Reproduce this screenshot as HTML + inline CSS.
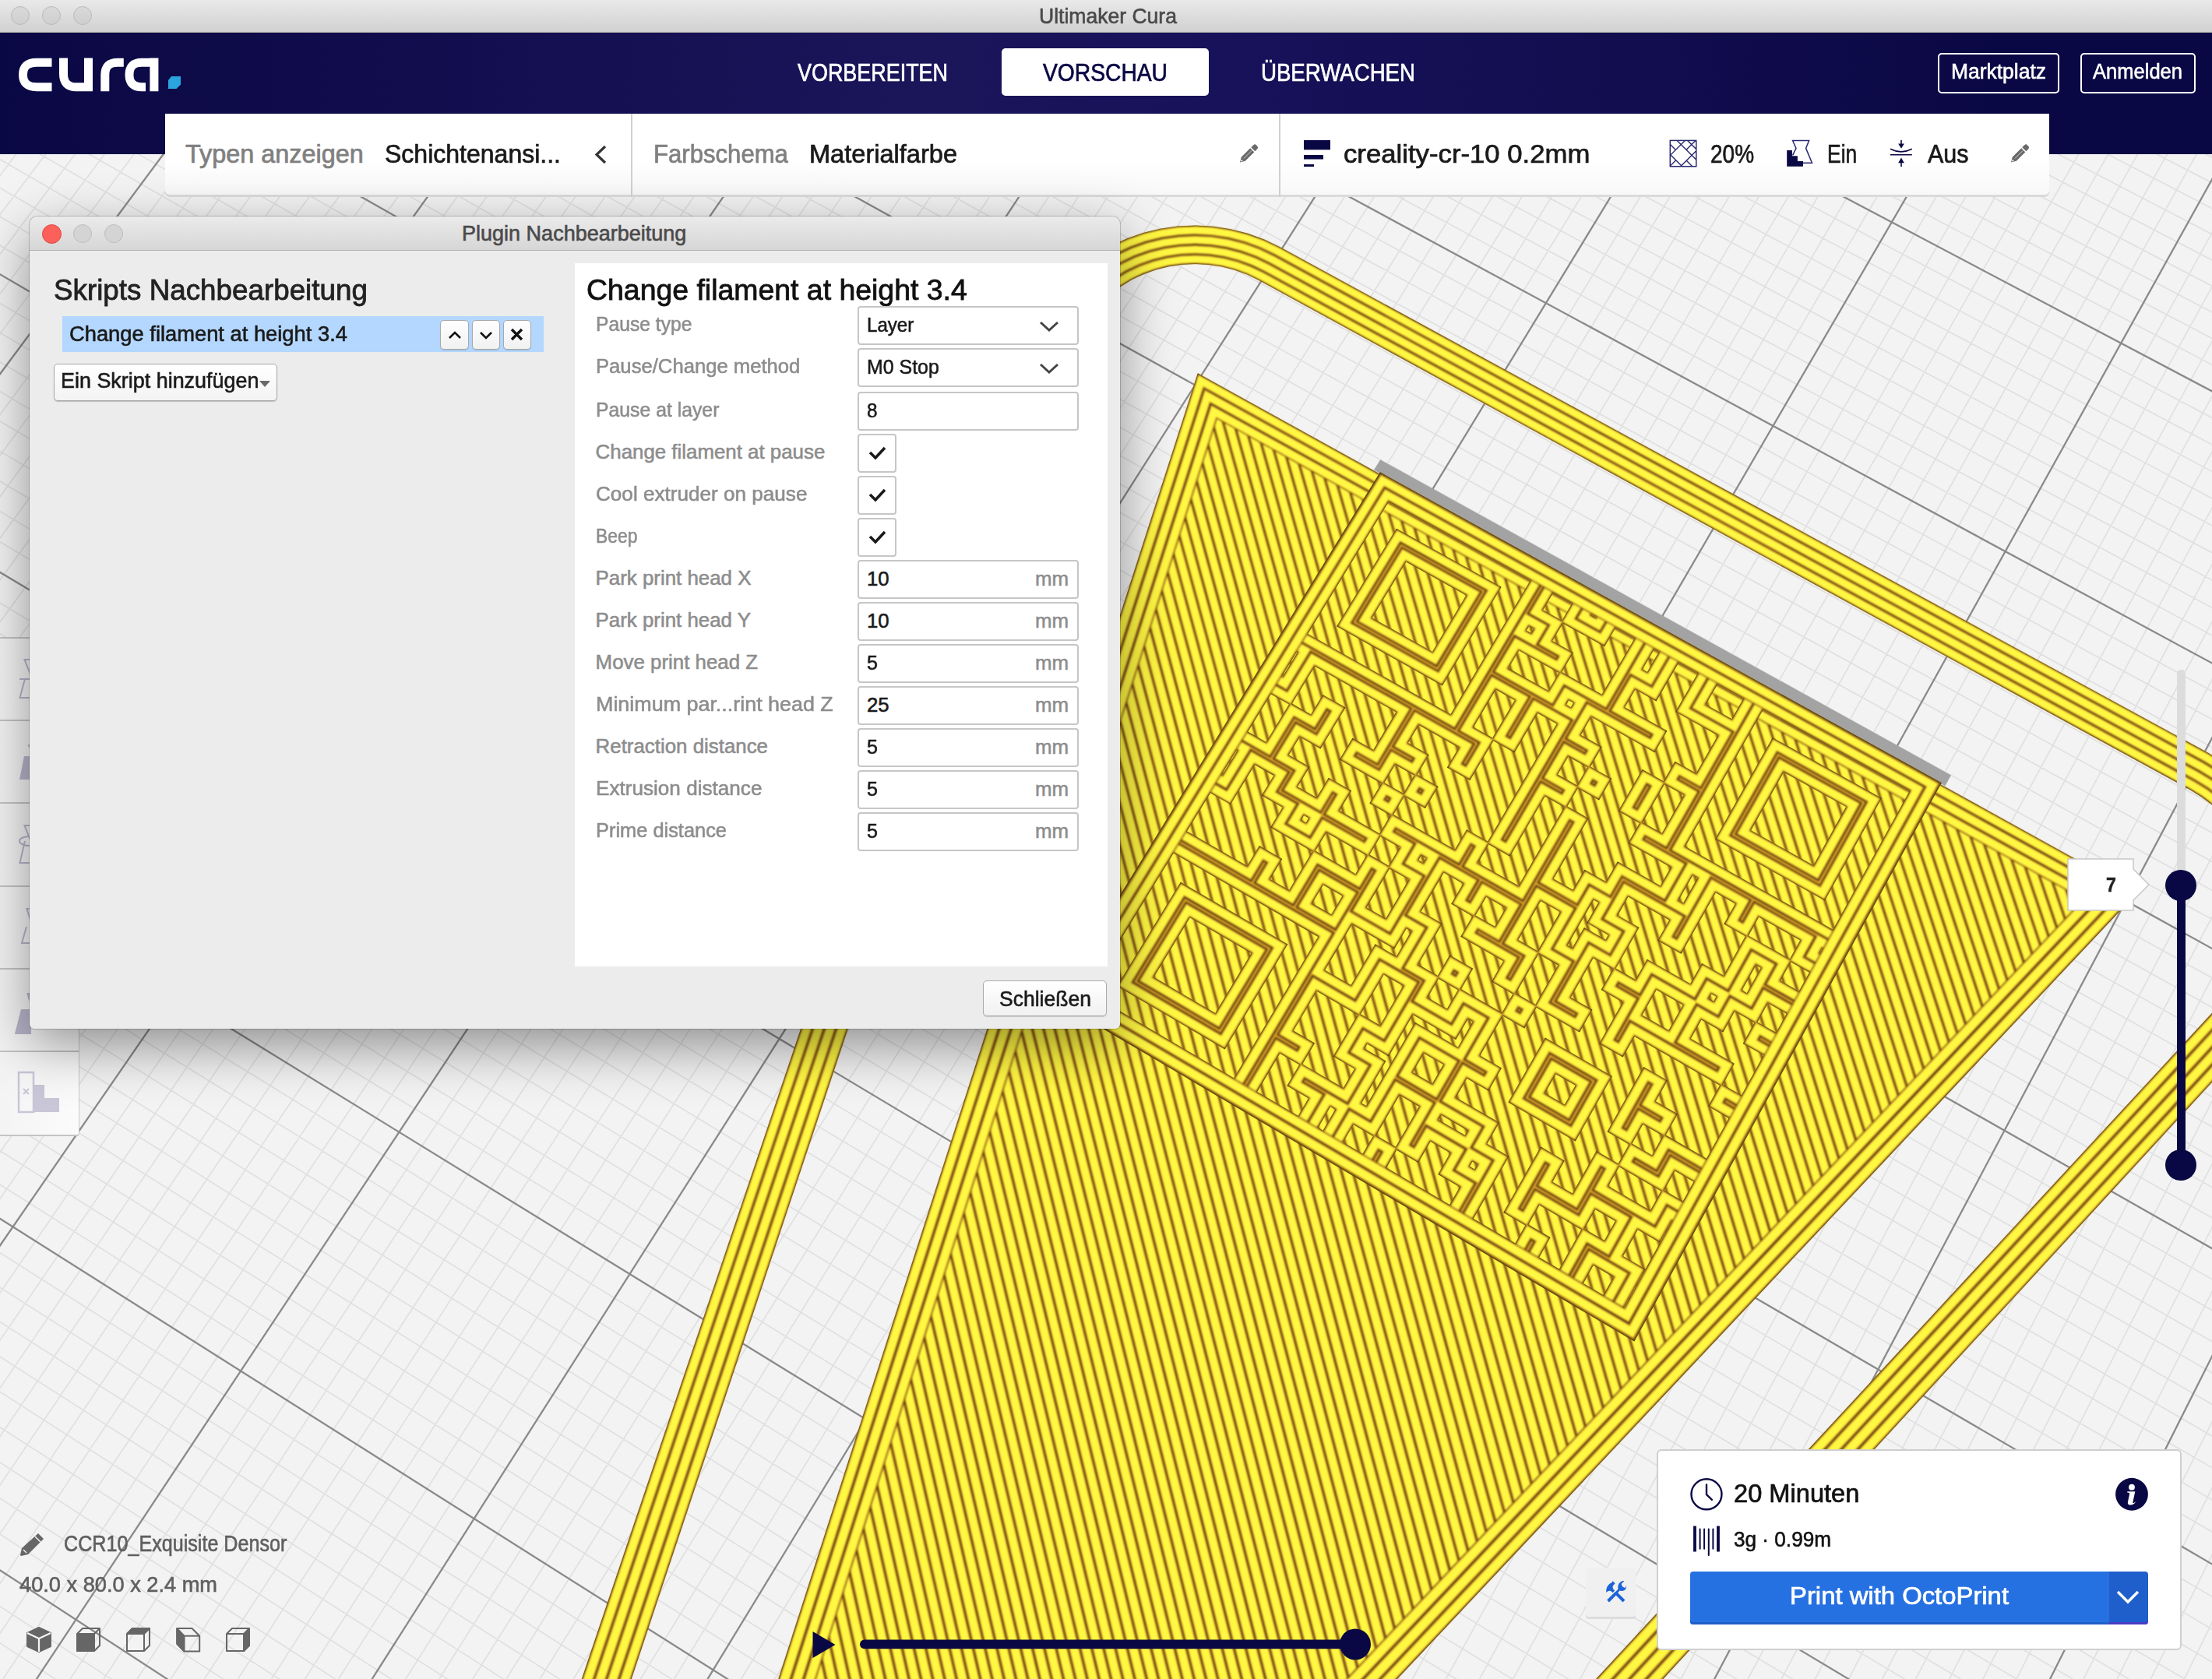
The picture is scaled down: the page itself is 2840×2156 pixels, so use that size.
<!DOCTYPE html><html><head><meta charset="utf-8"><style>
html,body{margin:0;padding:0;width:2840px;height:2156px;overflow:hidden;background:#f3f3f3;font-family:"Liberation Sans",sans-serif;}
.t{position:absolute;white-space:nowrap;line-height:1.117;transform-origin:0 0;-webkit-text-stroke-width:0.022em;}
.a{position:absolute;}
svg{position:absolute;left:0;top:0;}
</style></head><body>
<svg width="2840" height="2156" viewBox="0 0 2840 2156">
<defs><filter id="bl" x="-5%" y="-5%" width="110%" height="110%"><feGaussianBlur stdDeviation="0.95"/></filter></defs>
<rect width="2840" height="2156" fill="#f3f3f3"/>
<path d="M-1766.0,1781.3L804.4,-1455.7M-1738.8,1800.1L828.4,-1443.9M-1711.6,1818.9L852.5,-1432.0M-1684.3,1837.8L876.6,-1420.1M-1656.9,1856.7L900.8,-1408.2M-1629.5,1875.7L925.0,-1396.3M-1601.9,1894.8L949.2,-1384.3M-1574.4,1913.8L973.5,-1372.4M-1546.7,1933.0L997.9,-1360.4M-1491.2,1971.3L1046.7,-1336.3M-1463.4,1990.6L1071.2,-1324.2M-1435.5,2009.9L1095.7,-1312.1M-1407.5,2029.3L1120.3,-1300.0M-1379.4,2048.7L1144.9,-1287.9M-1351.3,2068.1L1169.6,-1275.7M-1323.1,2087.6L1194.3,-1263.6M-1294.9,2107.2L1219.1,-1251.3M-1266.6,2126.8L1243.9,-1239.1M-1209.7,2166.1L1293.7,-1214.6M-1181.2,2185.8L1318.6,-1202.3M-1152.6,2205.6L1343.6,-1190.0M-1123.9,2225.5L1368.7,-1177.6M-1095.1,2245.4L1393.8,-1165.2M-1066.3,2265.3L1419.0,-1152.8M-1037.4,2285.3L1444.2,-1140.4M-1008.5,2305.3L1469.4,-1128.0M-979.5,2325.4L1494.7,-1115.5M-921.2,2365.7L1545.5,-1090.5M-891.9,2386.0L1570.9,-1077.9M-862.6,2406.2L1596.4,-1065.4M-833.2,2426.6L1622.0,-1052.8M-803.7,2447.0L1647.6,-1040.2M-774.2,2467.4L1673.2,-1027.5M-744.6,2487.9L1698.9,-1014.8M-714.9,2508.4L1724.7,-1002.2M-685.1,2529.0L1750.5,-989.4M-625.4,2570.4L1802.3,-963.9M-595.4,2591.1L1828.2,-951.1M-565.3,2611.9L1854.2,-938.3M-535.2,2632.8L1880.3,-925.5M-504.9,2653.7L1906.4,-912.6M-474.7,2674.6L1932.6,-899.7M-444.3,2695.6L1958.8,-886.8M-413.8,2716.7L1985.1,-873.8M-383.3,2737.8L2011.4,-860.9M-322.0,2780.2L2064.2,-834.8M-291.3,2801.5L2090.7,-821.8M-260.4,2822.8L2117.2,-808.7M-229.5,2844.2L2143.8,-795.6M-198.5,2865.7L2170.5,-782.5M-167.4,2887.2L2197.2,-769.3M-136.3,2908.7L2223.9,-756.1M-105.0,2930.3L2250.7,-742.9M-73.7,2952.0L2277.6,-729.7M-10.8,2995.5L2331.4,-703.1M20.7,3017.3L2358.5,-689.8M52.4,3039.2L2385.5,-676.5M84.1,3061.2L2412.7,-663.1M115.9,3083.2L2439.8,-649.7M147.8,3105.3L2467.1,-636.3M179.8,3127.4L2494.4,-622.8M211.8,3149.5L2521.7,-609.4M244.0,3171.8L2549.1,-595.9M308.5,3216.4L2604.1,-568.8M340.9,3238.8L2631.7,-555.2M373.4,3261.3L2659.3,-541.6M406.0,3283.8L2687.0,-527.9M438.6,3306.4L2714.7,-514.2M471.4,3329.1L2742.5,-500.5M504.2,3351.8L2770.4,-486.8M537.1,3374.6L2798.3,-473.0M570.1,3397.4L2826.3,-459.3M636.3,3443.2L2882.4,-431.6M669.6,3466.2L2910.6,-417.7M703.0,3489.3L2938.8,-403.8M736.4,3512.4L2967.0,-389.9M769.9,3535.6L2995.3,-376.0M803.5,3558.9L3023.7,-362.0M837.2,3582.2L3052.2,-347.9M871.0,3605.6L3080.7,-333.9M904.9,3629.0L3109.2,-319.8M973.0,3676.1L3166.5,-291.6M1007.1,3699.7L3195.2,-277.4M1041.4,3723.4L3224.0,-263.2M1075.7,3747.2L3252.9,-249.0M1110.2,3771.0L3281.8,-234.8M1144.7,3794.9L3310.8,-220.5M1179.3,3818.9L3339.8,-206.2M1214.1,3842.9L3368.9,-191.8M1248.9,3867.0L3398.1,-177.5M1318.8,3915.3L3456.6,-148.6M1353.9,3939.6L3485.9,-134.2M1389.1,3964.0L3515.3,-119.7M1424.4,3988.4L3544.8,-105.2M1459.8,4012.9L3574.3,-90.6M1495.3,4037.4L3603.9,-76.0M1530.8,4062.0L3633.6,-61.4M1566.5,4086.7L3663.3,-46.8M1602.3,4111.5L3693.1,-32.1M1674.2,4161.2L3752.8,-2.6M1710.2,4186.1L3782.8,12.1M1746.4,4211.2L3812.8,26.9M1782.7,4236.3L3842.9,41.8M1819.1,4261.4L3873.1,56.6M1855.5,4286.7L3903.3,71.5M1892.1,4312.0L3933.6,86.5M1928.8,4337.4L3964.0,101.4M1965.6,4362.8L3994.4,116.4M2039.5,4413.9L4055.4,146.5M2076.6,4439.6L4086.0,161.6M2113.8,4465.3L4116.7,176.7M2151.1,4491.1L4147.5,191.9M2188.5,4517.0L4178.3,207.0M2226.0,4543.0L4209.2,222.3M2263.6,4569.0L4240.1,237.5M2301.4,4595.1L4271.1,252.8M2339.2,4621.3L4302.2,268.1M-1768.2,1731.3L2396.8,4603.7M-1743.5,1700.2L2416.3,4560.1M-1718.8,1669.2L2435.7,4516.8M-1694.2,1638.3L2455.1,4473.6M-1669.7,1607.6L2474.3,4430.6M-1645.3,1577.0L2493.5,4387.9M-1621.0,1546.5L2512.6,4345.3M-1596.8,1516.1L2531.6,4302.9M-1572.7,1485.8L2550.5,4260.7M-1524.7,1425.7L2588.1,4177.0M-1500.9,1395.8L2606.7,4135.4M-1477.2,1366.0L2625.3,4094.0M-1453.5,1336.3L2643.7,4052.8M-1430.0,1306.7L2662.1,4011.7M-1406.5,1277.3L2680.4,3970.9M-1383.2,1248.0L2698.7,3930.2M-1359.9,1218.7L2716.8,3889.8M-1336.7,1189.6L2734.9,3849.5M-1290.6,1131.8L2770.7,3769.5M-1267.7,1103.0L2788.5,3729.7M-1244.8,1074.3L2806.3,3690.2M-1222.1,1045.8L2823.9,3650.8M-1199.4,1017.3L2841.5,3611.6M-1176.8,989.0L2859.0,3572.5M-1154.3,960.8L2876.4,3533.6M-1131.9,932.7L2893.8,3495.0M-1109.6,904.6L2911.0,3456.4M-1065.2,848.9L2945.4,3379.9M-1043.1,821.2L2962.4,3341.9M-1021.2,793.6L2979.4,3304.0M-999.3,766.1L2996.3,3266.4M-977.4,738.7L3013.1,3228.8M-955.7,711.4L3029.8,3191.5M-934.0,684.3L3046.5,3154.3M-912.4,657.2L3063.1,3117.3M-890.9,630.2L3079.6,3080.4M-848.2,576.5L3112.5,3007.1M-826.9,549.8L3128.8,2970.7M-805.7,523.2L3145.0,2934.5M-784.6,496.7L3161.2,2898.4M-763.6,470.3L3177.3,2862.5M-742.6,444.0L3193.3,2826.7M-721.8,417.8L3209.3,2791.1M-700.9,391.7L3225.2,2755.6M-680.2,365.7L3241.0,2720.3M-639.0,314.0L3272.5,2650.1M-618.5,288.2L3288.1,2615.2M-598.1,262.6L3303.7,2580.5M-577.7,237.1L3319.2,2545.9M-557.4,211.6L3334.7,2511.5M-537.2,186.2L3350.0,2477.2M-517.1,161.0L3365.3,2443.0M-497.0,135.8L3380.6,2409.0M-477.0,110.7L3395.8,2375.1M-437.3,60.8L3425.9,2307.8M-417.5,36.0L3440.9,2274.4M-397.8,11.2L3455.9,2241.0M-378.1,-13.4L3470.7,2207.9M-358.6,-38.0L3485.6,2174.8M-339.1,-62.5L3500.3,2141.9M-319.6,-86.9L3515.0,2109.1M-300.3,-111.2L3529.6,2076.5M-281.0,-135.4L3544.2,2044.0M-242.6,-183.6L3573.2,1979.4M-223.5,-207.5L3587.6,1947.3M-204.5,-231.4L3601.9,1915.3M-185.5,-255.2L3616.2,1883.4M-166.6,-278.9L3630.4,1851.7M-147.8,-302.6L3644.6,1820.1M-129.0,-326.1L3658.7,1788.6M-110.3,-349.6L3672.7,1757.3M-91.7,-373.0L3686.7,1726.1M-54.6,-419.5L3714.5,1664.0M-36.1,-442.6L3728.4,1633.1M-17.8,-465.7L3742.1,1602.4M0.6,-488.7L3755.9,1571.8M18.8,-511.6L3769.5,1541.3M37.0,-534.5L3783.2,1510.9M55.1,-557.2L3796.7,1480.7M73.2,-579.9L3810.2,1450.6M91.2,-602.5L3823.7,1420.6M127.1,-647.5L3850.4,1360.9M144.9,-669.8L3863.7,1331.2M162.7,-692.1L3877.0,1301.7M180.4,-714.4L3890.2,1272.2M198.0,-736.5L3903.3,1242.9M215.6,-758.6L3916.4,1213.7M233.1,-780.6L3929.4,1184.6M250.6,-802.5L3942.4,1155.6M268.0,-824.4L3955.4,1126.7M302.7,-867.9L3981.1,1069.3M319.9,-889.5L3993.9,1040.8M337.1,-911.1L4006.7,1012.4M354.2,-932.6L4019.4,984.0M371.3,-954.0L4032.0,955.8M388.3,-975.3L4044.6,927.7M405.3,-996.6L4057.2,899.7M422.2,-1017.8L4069.7,871.8M439.0,-1039.0L4082.1,844.0M472.5,-1081.1L4106.9,788.7M489.2,-1102.0L4119.2,761.2M505.8,-1122.9L4131.5,733.8M522.4,-1143.7L4143.7,706.6M538.9,-1164.4L4155.9,679.4M555.4,-1185.1L4168.1,652.3M571.8,-1205.7L4180.1,625.3M588.2,-1226.2L4192.2,598.4M604.5,-1246.7L4204.2,571.7M636.9,-1287.4L4228.1,518.4M653.1,-1307.7L4240.0,491.9M669.2,-1327.9L4251.8,465.5M685.2,-1348.0L4263.6,439.2M701.2,-1368.1L4275.3,413.0M717.2,-1388.1L4287.0,386.9M733.1,-1408.1L4298.7,360.9M748.9,-1427.9L4310.3,335.0M764.7,-1447.8L4321.9,309.2" stroke="#e0e0e0" stroke-width="1.7" fill="none"/><path d="M-1793.1,1762.5L780.4,-1467.5M-1519.0,1952.1L1022.2,-1348.3M-1238.2,2146.4L1268.7,-1226.9M-950.3,2345.5L1520.1,-1103.0M-655.3,2549.7L1776.4,-976.7M-352.7,2759.0L2037.8,-847.9M-42.3,2973.7L2304.5,-716.4M276.2,3194.1L2576.6,-582.3M603.2,3420.3L2854.3,-445.4M938.9,3652.5L3137.8,-305.7M1283.8,3891.1L3427.3,-163.1M1638.2,4136.3L3722.9,-17.4M2002.5,4388.3L4024.9,131.4M2377.1,4647.5L4333.4,283.5M-1793.1,1762.5L2377.1,4647.5M-1548.7,1455.7L2569.3,4218.8M-1313.6,1160.6L2752.8,3809.4M-1087.4,876.7L2928.2,3418.1M-869.5,603.3L3096.1,3043.7M-659.6,339.8L3256.8,2685.1M-457.1,85.7L3410.9,2341.4M-261.7,-159.5L3558.7,2011.6M-73.1,-396.3L3700.7,1695.0M109.2,-625.0L3837.1,1390.7M285.4,-846.2L3968.3,1098.0M455.8,-1060.1L4094.5,816.3M620.7,-1267.1L4216.2,545.0M780.4,-1467.5L4333.4,283.5" stroke="#8a8a8a" stroke-width="2.3" fill="none"/>
<path d="M1328.6,429.2L1336.6,409.3L1346.8,390.3L1359.1,372.4L1373.4,355.9L1389.4,340.9L1407.1,327.6L1426.2,316.1L1446.4,306.6L1467.7,299.1L1489.6,293.7L1512.1,290.5L1534.8,289.5L1557.5,290.7L1580.0,294.2L1602.0,299.8L1623.2,307.5L1643.5,317.3L2835.6,967.0L2856.7,979.9L2876.4,994.7L2894.6,1011.3L2911.1,1029.6L2925.6,1049.3L2938.0,1070.3L2948.2,1092.3L2956.0,1115.0L2961.4,1138.2L2964.2,1161.7L2964.4,1185.2L2962.0,1208.4L2957.0,1231.0L2949.5,1252.8L2939.5,1273.5L2927.2,1292.9L2912.6,1310.8L764.0,3647.3L742.4,3668.6L718.9,3687.2L693.9,3703.1L667.7,3715.9L640.5,3725.6L612.7,3732.0L584.5,3735.1L556.4,3734.7L528.7,3731.0L501.6,3723.9L475.6,3713.6L450.9,3700.1L427.7,3683.7L406.5,3664.5L387.3,3642.8L370.5,3618.8L356.2,3592.9L344.5,3565.2L335.7,3536.3L329.7,3506.3L326.6,3475.6L326.5,3444.7L329.3,3413.8L335.0,3383.2L343.5,3353.4ZM405.0,3374.8L398.7,3397.2L394.5,3420.0L392.5,3443.1L392.6,3466.2L395.0,3489.1L399.6,3511.4L406.3,3533.0L415.0,3553.6L425.7,3572.9L438.3,3590.7L452.7,3606.8L468.5,3621.1L485.8,3633.3L504.2,3643.2L523.6,3650.9L543.7,3656.1L564.4,3658.9L585.3,3659.2L606.2,3656.9L626.9,3652.1L647.2,3645.0L666.7,3635.4L685.4,3623.7L702.8,3609.8L719.0,3594.1L2867.9,1270.7L2878.8,1257.5L2888.1,1243.0L2895.6,1227.6L2901.2,1211.4L2905.0,1194.5L2906.9,1177.2L2906.8,1159.7L2904.8,1142.1L2900.8,1124.7L2895.0,1107.7L2887.5,1091.2L2878.2,1075.5L2867.4,1060.7L2855.1,1047.0L2841.5,1034.5L2826.7,1023.4L2811.0,1013.7L1616.4,360.0L1601.2,352.6L1585.2,346.8L1568.8,342.6L1551.9,340.0L1534.9,339.1L1517.8,339.8L1501.0,342.2L1484.5,346.3L1468.6,351.9L1453.4,359.1L1439.2,367.7L1426.0,377.7L1414.0,389.0L1403.3,401.4L1394.1,414.8L1386.5,429.0L1380.6,444.0Z" fill="#2c2608" fill-rule="evenodd"/><g filter="url(#bl)"><path d="M1368.2,440.4L1374.7,424.3L1382.9,408.9L1392.8,394.5L1404.3,381.1L1417.3,369.0L1431.5,358.2L1446.9,348.9L1463.3,341.1L1480.5,335.0L1498.3,330.7L1516.5,328.1L1534.9,327.3L1553.2,328.3L1571.4,331.1L1589.2,335.6L1606.4,341.9L1622.8,349.8L2816.9,1002.6L2833.9,1013.0L2849.8,1025.0L2864.5,1038.5L2877.8,1053.3L2889.5,1069.3L2899.5,1086.3L2907.7,1104.0L2913.9,1122.4L2918.2,1141.2L2920.4,1160.2L2920.5,1179.1L2918.5,1197.8L2914.5,1216.0L2908.4,1233.6L2900.3,1250.3L2890.3,1265.9L2878.5,1280.2L729.6,3606.7L712.2,3623.7L693.3,3638.7L673.2,3651.4L652.0,3661.8L630.1,3669.5L607.7,3674.7L585.1,3677.1L562.5,3676.9L540.2,3673.9L518.4,3668.2L497.4,3659.9L477.5,3649.1L458.9,3635.9L441.7,3620.5L426.3,3603.1L412.7,3583.8L401.1,3562.9L391.6,3540.7L384.4,3517.3L379.5,3493.2L377.0,3468.5L376.8,3443.5L379.0,3418.5L383.5,3393.8L390.4,3369.7ZM404.2,3374.6L397.9,3397.0L393.7,3419.9L391.6,3443.1L391.8,3466.3L394.2,3489.3L398.8,3511.8L405.5,3533.4L414.3,3554.1L425.1,3573.5L437.7,3591.4L452.1,3607.6L468.0,3621.9L485.3,3634.1L503.8,3644.1L523.3,3651.8L543.5,3657.1L564.3,3659.8L585.3,3660.1L606.3,3657.8L627.1,3653.1L647.4,3645.8L667.1,3636.3L685.8,3624.5L703.3,3610.6L719.5,3594.7L2868.5,1271.2L2879.4,1257.9L2888.7,1243.4L2896.2,1227.9L2901.9,1211.6L2905.7,1194.7L2907.6,1177.3L2907.5,1159.7L2905.5,1142.1L2901.5,1124.6L2895.7,1107.5L2888.1,1091.0L2878.8,1075.2L2867.9,1060.3L2855.6,1046.5L2841.9,1034.0L2827.1,1022.8L2811.3,1013.1L1616.7,359.5L1601.4,352.1L1585.4,346.2L1568.9,342.0L1552.0,339.4L1534.9,338.4L1517.8,339.2L1500.8,341.6L1484.3,345.7L1468.3,351.3L1453.1,358.5L1438.8,367.2L1425.5,377.3L1413.5,388.6L1402.8,401.0L1393.5,414.5L1385.9,428.8L1380.0,443.8ZM1355.2,436.8L1362.2,419.4L1371.0,402.8L1381.7,387.2L1394.2,372.8L1408.1,359.7L1423.5,348.1L1440.1,338.1L1457.8,329.8L1476.3,323.2L1495.4,318.5L1515.0,315.7L1534.8,314.9L1554.6,315.9L1574.2,318.9L1593.4,323.9L1611.9,330.6L1629.6,339.1L2823.0,990.9L2841.4,1002.1L2858.5,1015.1L2874.4,1029.6L2888.7,1045.5L2901.3,1062.7L2912.1,1081.0L2921.0,1100.2L2927.7,1120.0L2932.4,1140.2L2934.8,1160.7L2934.9,1181.1L2932.8,1201.3L2928.4,1220.9L2921.8,1239.9L2913.1,1257.9L2902.4,1274.7L2889.7,1290.2L740.9,3620.0L722.1,3638.4L701.7,3654.6L680.0,3668.3L657.2,3679.5L633.5,3687.9L609.4,3693.4L584.9,3696.1L560.5,3695.8L536.4,3692.6L512.9,3686.4L490.3,3677.5L468.8,3665.8L448.7,3651.6L430.2,3634.9L413.5,3616.1L398.8,3595.3L386.4,3572.7L376.2,3548.7L368.4,3523.5L363.2,3497.5L360.5,3470.8L360.3,3443.9L362.7,3417.0L367.6,3390.4L375.0,3364.4ZM388.8,3369.2L382.0,3393.5L377.4,3418.4L375.2,3443.5L375.3,3468.7L377.9,3493.6L382.8,3518.0L390.1,3541.5L399.6,3563.9L411.3,3584.9L425.0,3604.4L440.6,3622.0L457.8,3637.5L476.6,3650.8L496.7,3661.7L517.8,3670.0L539.8,3675.7L562.3,3678.7L585.1,3679.0L607.9,3676.5L630.5,3671.4L652.5,3663.5L673.8,3653.1L694.1,3640.3L713.2,3625.2L730.8,3608.0L2879.6,1281.2L2891.5,1266.8L2901.6,1251.0L2909.7,1234.2L2915.9,1216.5L2920.0,1198.1L2922.0,1179.3L2921.8,1160.2L2919.6,1141.1L2915.3,1122.2L2909.0,1103.6L2900.8,1085.7L2890.7,1068.6L2878.9,1052.5L2865.5,1037.6L2850.7,1024.0L2834.6,1011.9L2817.5,1001.4L1623.5,348.8L1607.0,340.8L1589.6,334.4L1571.7,329.8L1553.4,327.0L1534.8,326.0L1516.3,326.8L1498.0,329.4L1480.1,333.8L1462.8,340.0L1446.3,347.8L1430.7,357.2L1416.4,368.0L1403.3,380.3L1391.7,393.8L1381.7,408.3L1373.4,423.8L1366.9,440.1ZM1342.2,433.1L1349.7,414.4L1359.2,396.7L1370.7,380.0L1384.0,364.6L1399.0,350.5L1415.5,338.1L1433.3,327.4L1452.2,318.4L1472.1,311.4L1492.6,306.4L1513.6,303.4L1534.8,302.5L1556.0,303.6L1577.0,306.8L1597.6,312.1L1617.5,319.3L1636.4,328.5L2829.2,979.3L2848.8,991.3L2867.3,1005.1L2884.3,1020.7L2899.6,1037.7L2913.2,1056.2L2924.8,1075.8L2934.3,1096.3L2941.5,1117.5L2946.5,1139.3L2949.1,1161.2L2949.3,1183.1L2947.0,1204.7L2942.4,1225.9L2935.3,1246.2L2926.0,1265.5L2914.5,1283.6L2900.9,1300.2L752.1,3633.3L732.0,3653.1L710.1,3670.5L686.8,3685.3L662.3,3697.2L636.9,3706.3L611.0,3712.2L584.7,3715.1L558.5,3714.8L532.6,3711.3L507.4,3704.7L483.1,3695.1L460.1,3682.5L438.5,3667.2L418.6,3649.4L400.7,3629.1L385.0,3606.8L371.7,3582.5L360.8,3556.8L352.5,3529.7L346.8,3501.8L344.0,3473.2L343.8,3444.3L346.4,3415.4L351.7,3386.9L359.6,3359.0ZM373.5,3363.9L366.0,3390.0L361.1,3416.8L358.7,3443.9L358.8,3471.1L361.5,3497.9L366.8,3524.2L374.7,3549.5L384.9,3573.7L397.5,3596.4L412.2,3617.4L429.0,3636.4L447.7,3653.1L467.9,3667.5L489.6,3679.2L512.4,3688.2L536.0,3694.4L560.3,3697.7L584.9,3698.0L609.5,3695.3L633.9,3689.7L657.7,3681.2L680.6,3670.0L702.5,3656.2L723.1,3639.9L742.0,3621.3L2890.8,1291.2L2903.6,1275.6L2914.4,1258.7L2923.2,1240.5L2929.8,1221.4L2934.2,1201.6L2936.3,1181.3L2936.2,1160.7L2933.8,1140.1L2929.1,1119.7L2922.3,1099.8L2913.4,1080.5L2902.5,1062.1L2889.8,1044.7L2875.4,1028.7L2859.4,1014.1L2842.1,1001.0L2823.6,989.8L1630.3,338.1L1612.5,329.5L1593.8,322.7L1574.5,317.7L1554.8,314.7L1534.8,313.6L1514.9,314.5L1495.2,317.3L1475.9,322.0L1457.2,328.6L1439.4,337.0L1422.7,347.1L1407.2,358.8L1393.1,372.0L1380.6,386.5L1369.9,402.2L1360.9,418.9L1353.9,436.4ZM1329.2,429.4L1337.2,409.5L1347.4,390.6L1359.7,372.8L1373.9,356.3L1389.9,341.4L1407.5,328.1L1426.5,316.6L1446.7,307.1L1467.9,299.6L1489.8,294.3L1512.2,291.1L1534.8,290.1L1557.4,291.3L1579.9,294.8L1601.8,300.4L1623.0,308.1L1643.2,317.8L2835.3,967.6L2856.3,980.4L2876.0,995.2L2894.1,1011.7L2910.5,1030.0L2925.0,1049.6L2937.4,1070.5L2947.6,1092.5L2955.3,1115.1L2960.7,1138.3L2963.5,1161.7L2963.7,1185.1L2961.3,1208.2L2956.3,1230.8L2948.8,1252.5L2938.9,1273.2L2926.6,1292.5L2912.1,1310.3L763.4,3646.7L741.9,3667.8L718.5,3686.4L693.6,3702.2L667.4,3715.0L640.3,3724.7L612.6,3731.1L584.5,3734.1L556.5,3733.8L528.9,3730.1L501.9,3723.0L476.0,3712.7L451.3,3699.3L428.2,3682.9L407.1,3663.8L388.0,3642.2L371.2,3618.3L356.9,3592.4L345.3,3564.8L336.5,3536.0L330.5,3506.1L327.4,3475.5L327.3,3444.7L330.1,3413.8L335.8,3383.4L344.3,3353.7ZM358.1,3358.5L350.1,3386.5L344.8,3415.3L342.2,3444.3L342.3,3473.4L345.2,3502.2L350.9,3530.4L359.2,3557.6L370.2,3583.5L383.6,3607.9L399.5,3630.4L417.5,3650.8L437.4,3668.8L459.2,3684.2L482.4,3696.8L506.9,3706.5L532.3,3713.2L558.3,3716.7L584.7,3717.0L611.1,3714.1L637.3,3708.1L662.8,3699.0L687.5,3686.9L710.9,3672.1L733.0,3654.6L753.3,3634.7L2902.0,1301.2L2915.7,1284.5L2927.3,1266.3L2936.7,1246.8L2943.8,1226.3L2948.4,1205.1L2950.7,1183.3L2950.5,1161.2L2947.9,1139.2L2942.9,1117.3L2935.6,1095.9L2926.0,1075.3L2914.4,1055.5L2900.7,1037.0L2885.2,1019.8L2868.1,1004.1L2849.6,990.2L2829.8,978.1L1637.1,327.4L1618.0,318.2L1598.0,310.9L1577.3,305.6L1556.2,302.4L1534.8,301.2L1513.4,302.2L1492.3,305.2L1471.6,310.2L1451.7,317.3L1432.6,326.3L1414.7,337.1L1398.1,349.6L1383.0,363.7L1369.6,379.3L1358.0,396.1L1348.4,413.9L1340.9,432.7Z" fill="#d89a28" fill-rule="evenodd"/><path d="M1369.8,440.9L1376.2,424.9L1384.3,409.7L1394.1,395.4L1405.5,382.1L1418.4,370.1L1432.5,359.4L1447.8,350.1L1464.0,342.5L1481.0,336.4L1498.6,332.1L1516.6,329.5L1534.9,328.8L1553.1,329.7L1571.1,332.5L1588.7,337.0L1605.8,343.3L1622.0,351.1L2816.1,1004.0L2833.0,1014.3L2848.8,1026.2L2863.3,1039.6L2876.5,1054.2L2888.1,1070.1L2898.0,1086.9L2906.1,1104.5L2912.3,1122.7L2916.5,1141.3L2918.7,1160.1L2918.8,1178.9L2916.8,1197.4L2912.8,1215.4L2906.7,1232.8L2898.7,1249.4L2888.8,1264.8L2877.2,1279.0L728.3,3605.1L711.0,3622.0L692.3,3636.8L672.4,3649.4L651.4,3659.6L629.7,3667.3L607.6,3672.4L585.1,3674.9L562.7,3674.6L540.6,3671.6L519.1,3666.0L498.3,3657.8L478.5,3647.1L460.1,3634.0L443.1,3618.8L427.8,3601.5L414.3,3582.4L402.8,3561.7L393.5,3539.7L386.3,3516.6L381.5,3492.7L378.9,3468.2L378.8,3443.4L381.0,3418.7L385.5,3394.3L392.2,3370.4ZM402.3,3373.9L396.0,3396.6L391.7,3419.7L389.7,3443.2L389.8,3466.6L392.2,3489.8L396.9,3512.5L403.6,3534.4L412.5,3555.3L423.4,3574.8L436.2,3592.9L450.7,3609.3L466.8,3623.7L484.3,3636.1L503.0,3646.2L522.7,3654.0L543.1,3659.3L564.0,3662.1L585.3,3662.4L606.5,3660.1L627.5,3655.2L648.0,3648.0L667.9,3638.3L686.8,3626.4L704.5,3612.3L720.9,3596.3L2869.8,1272.4L2880.9,1259.0L2890.3,1244.3L2897.9,1228.7L2903.6,1212.2L2907.4,1195.1L2909.3,1177.5L2909.2,1159.8L2907.2,1141.9L2903.2,1124.3L2897.3,1107.0L2889.6,1090.3L2880.2,1074.4L2869.3,1059.4L2856.8,1045.5L2843.0,1032.8L2828.0,1021.5L2812.0,1011.7L1617.5,358.2L1602.1,350.7L1585.9,344.8L1569.2,340.5L1552.1,337.9L1534.9,337.0L1517.6,337.7L1500.5,340.1L1483.8,344.3L1467.7,350.0L1452.3,357.3L1437.8,366.0L1424.4,376.2L1412.2,387.6L1401.4,400.1L1392.1,413.7L1384.4,428.2L1378.4,443.3ZM1356.8,437.2L1363.7,420.0L1372.5,403.5L1383.1,388.1L1395.4,373.8L1409.2,360.9L1424.5,349.3L1440.9,339.4L1458.4,331.1L1476.8,324.6L1495.8,320.0L1515.2,317.2L1534.8,316.3L1554.5,317.4L1573.9,320.4L1592.9,325.3L1611.3,332.0L1628.8,340.4L2822.3,992.3L2840.5,1003.4L2857.5,1016.2L2873.2,1030.6L2887.4,1046.5L2899.9,1063.5L2910.6,1081.6L2919.4,1100.6L2926.1,1120.3L2930.7,1140.3L2933.0,1160.6L2933.2,1180.9L2931.1,1200.9L2926.7,1220.4L2920.2,1239.1L2911.6,1257.0L2900.9,1273.7L2888.3,1289.0L739.5,3618.4L720.9,3636.7L700.7,3652.7L679.1,3666.3L656.5,3677.3L633.1,3685.7L609.2,3691.2L584.9,3693.8L560.7,3693.5L536.9,3690.3L513.6,3684.2L491.1,3675.4L469.8,3663.8L449.9,3649.7L431.6,3633.2L415.0,3614.5L400.5,3593.9L388.1,3571.5L378.0,3547.8L370.4,3522.8L365.1,3497.0L362.4,3470.5L362.3,3443.8L364.7,3417.1L369.5,3390.8L376.8,3365.0ZM387.0,3368.6L380.0,3393.1L375.4,3418.2L373.2,3443.6L373.3,3469.0L375.9,3494.1L380.9,3518.7L388.2,3542.4L397.8,3565.1L409.6,3586.3L423.4,3605.9L439.2,3623.7L456.6,3639.4L475.6,3652.8L495.9,3663.8L517.2,3672.2L539.3,3678.0L562.1,3681.0L585.1,3681.3L608.1,3678.8L630.9,3673.6L653.2,3665.6L674.7,3655.2L695.1,3642.2L714.4,3627.0L732.1,3609.6L2881.0,1282.4L2892.9,1267.8L2903.1,1251.9L2911.3,1235.0L2917.5,1217.1L2921.7,1198.6L2923.7,1179.5L2923.6,1160.3L2921.3,1141.0L2917.0,1121.9L2910.6,1103.2L2902.3,1085.1L2892.1,1067.8L2880.2,1051.6L2866.7,1036.5L2851.7,1022.8L2835.5,1010.6L2818.2,1000.0L1624.3,347.5L1607.6,339.4L1590.1,333.0L1572.0,328.4L1553.5,325.5L1534.8,324.5L1516.1,325.3L1497.7,328.0L1479.6,332.4L1462.1,338.6L1445.4,346.5L1429.8,356.0L1415.3,366.9L1402.1,379.3L1390.4,392.9L1380.3,407.6L1371.9,423.2L1365.4,439.6ZM1343.8,433.5L1351.2,415.0L1360.6,397.4L1372.0,380.9L1385.2,365.6L1400.1,351.6L1416.5,339.3L1434.1,328.6L1452.9,319.8L1472.6,312.8L1492.9,307.8L1513.8,304.9L1534.8,304.0L1555.9,305.1L1576.7,308.3L1597.1,313.5L1616.8,320.7L1635.6,329.8L2828.5,980.7L2847.9,992.6L2866.2,1006.3L2883.1,1021.7L2898.3,1038.7L2911.8,1057.0L2923.3,1076.4L2932.7,1096.8L2939.9,1117.8L2944.8,1139.4L2947.4,1161.1L2947.6,1182.9L2945.3,1204.3L2940.7,1225.3L2933.7,1245.4L2924.4,1264.6L2913.0,1282.5L2899.5,1299.0L750.8,3631.7L730.8,3651.3L709.1,3668.6L686.0,3683.2L661.7,3695.1L636.5,3704.0L610.8,3710.0L584.8,3712.8L558.8,3712.5L533.1,3709.0L508.1,3702.5L484.0,3693.0L461.1,3680.5L439.7,3665.3L420.0,3647.6L402.3,3627.5L386.7,3605.4L373.4,3581.4L362.6,3555.8L354.4,3529.0L348.8,3501.3L345.9,3472.9L345.8,3444.2L348.4,3415.6L353.6,3387.3L361.5,3359.7ZM371.6,3363.2L364.1,3389.6L359.1,3416.6L356.7,3444.0L356.8,3471.3L359.6,3498.4L364.9,3524.9L372.8,3550.5L383.1,3574.9L395.8,3597.8L410.7,3618.9L427.6,3638.1L446.4,3655.0L466.9,3669.5L488.7,3681.3L511.7,3690.4L535.6,3696.7L560.1,3700.0L584.9,3700.3L609.7,3697.6L634.3,3691.9L658.3,3683.4L681.5,3672.1L703.5,3658.1L724.2,3641.6L743.4,3622.9L2892.1,1292.4L2905.0,1276.7L2916.0,1259.6L2924.8,1241.3L2931.5,1222.0L2935.9,1202.0L2938.1,1181.5L2937.9,1160.8L2935.5,1140.0L2930.8,1119.4L2923.9,1099.3L2914.9,1079.9L2903.9,1061.3L2891.1,1043.8L2876.6,1027.6L2860.5,1012.9L2843.0,999.7L2824.4,988.4L1631.1,336.8L1613.2,328.1L1594.3,321.3L1574.9,316.3L1555.0,313.2L1534.8,312.1L1514.7,313.0L1494.8,315.8L1475.4,320.6L1456.6,327.3L1438.6,335.7L1421.7,345.9L1406.1,357.7L1391.9,371.0L1379.3,385.6L1368.4,401.5L1359.4,418.3L1352.4,435.9ZM1330.8,429.8L1338.7,410.1L1348.8,391.3L1361.0,373.6L1375.1,357.3L1391.0,342.5L1408.5,329.3L1427.3,317.9L1447.4,308.5L1468.4,301.1L1490.1,295.7L1512.3,292.6L1534.8,291.6L1557.3,292.8L1579.5,296.2L1601.3,301.8L1622.3,309.4L1642.4,319.1L2834.6,969.0L2855.4,981.7L2874.9,996.4L2892.9,1012.8L2909.2,1030.9L2923.6,1050.4L2935.9,1071.2L2946.0,1092.9L2953.7,1115.4L2959.0,1138.4L2961.7,1161.6L2961.9,1184.9L2959.6,1207.8L2954.6,1230.2L2947.2,1251.7L2937.3,1272.2L2925.1,1291.4L2910.7,1309.1L762.1,3645.1L740.7,3666.1L717.5,3684.5L692.8,3700.2L666.8,3712.9L639.9,3722.5L612.4,3728.8L584.6,3731.8L556.8,3731.5L529.3,3727.8L502.6,3720.8L476.8,3710.6L452.4,3697.3L429.5,3681.0L408.4,3662.1L389.5,3640.6L372.9,3616.9L358.7,3591.2L347.2,3563.9L338.4,3535.2L332.5,3505.6L329.4,3475.2L329.3,3444.6L332.1,3414.0L337.7,3383.8L346.2,3354.3ZM356.3,3357.9L348.2,3386.1L342.8,3415.1L340.2,3444.4L340.3,3473.7L343.2,3502.7L348.9,3531.1L357.4,3558.6L368.4,3584.7L382.0,3609.3L397.9,3632.0L416.1,3652.5L436.2,3670.7L458.1,3686.2L481.5,3699.0L506.2,3708.7L531.8,3715.4L558.1,3718.9L584.7,3719.3L611.3,3716.4L637.7,3710.3L663.4,3701.1L688.3,3689.0L711.9,3674.0L734.1,3656.3L754.6,3636.3L2903.3,1302.4L2917.1,1285.6L2928.8,1267.2L2938.3,1247.6L2945.4,1226.9L2950.2,1205.5L2952.4,1183.5L2952.3,1161.3L2949.6,1139.0L2944.6,1117.0L2937.2,1095.5L2927.6,1074.6L2915.8,1054.7L2902.0,1036.0L2886.4,1018.7L2869.2,1002.9L2850.5,988.9L2830.5,976.7L1637.9,326.1L1618.7,316.9L1598.5,309.5L1577.7,304.2L1556.4,300.9L1534.8,299.7L1513.3,300.7L1492.0,303.7L1471.1,308.8L1451.0,315.9L1431.8,325.0L1413.7,335.9L1397.0,348.5L1381.8,362.7L1368.3,378.4L1356.6,395.3L1346.9,413.4L1339.4,432.3Z" fill="#fff843" fill-rule="evenodd"/></g>
<path d="M1537.8,479.3L2743.6,1146.7L587.5,3438.4Z" fill="#2c2608"/><g filter="url(#bl)"><path d="M1538.2,480.2L2742.4,1146.8L589.4,3435.1ZM624.3,3375.4L2721.5,1149.3L1545.6,497.9ZM1546.5,499.8L2719.2,1149.6L628.2,3368.8ZM662.8,3309.6L2698.3,1152.2L1553.9,517.5ZM1554.8,519.5L2695.9,1152.4L666.6,3303.1ZM701.0,3244.3L2675.0,1155.0L1562.2,537.2Z" fill="#d89a28" fill-rule="evenodd"/><path d="M1539.2,482.6L2739.6,1147.1L594.1,3427.1ZM619.7,3383.4L2724.3,1149.0L1544.6,495.5ZM1547.5,502.2L2716.4,1150.0L632.8,3360.9ZM658.2,3317.5L2701.1,1151.8L1552.9,515.1ZM1555.8,521.8L2693.1,1152.8L671.2,3295.2ZM696.4,3252.1L2677.8,1154.6L1561.2,534.8Z" fill="#fff843" fill-rule="evenodd"/><path d="M710.3,3233.2L702.9,3241.1L708.5,3223.4ZM723.9,3218.8L711.6,3231.8L709.5,3220.2L718.7,3191.2ZM737.4,3204.5L725.2,3217.4L719.7,3188.0L728.9,3159.1ZM751.0,3190.1L738.8,3203.0L730.0,3155.8L739.1,3127.1ZM764.5,3175.8L752.3,3188.7L740.1,3123.9L749.3,3095.2ZM778.0,3161.5L765.9,3174.4L750.3,3092.0L759.4,3063.4ZM791.5,3147.2L779.4,3160.1L760.4,3060.2L769.4,3031.8ZM805.0,3133.0L792.8,3145.8L770.4,3028.6L779.5,3000.2ZM818.4,3118.8L806.3,3131.6L780.5,2997.1L789.5,2968.8ZM831.8,3104.6L819.7,3117.4L790.5,2965.7L799.4,2937.5ZM845.2,3090.4L833.2,3103.2L800.4,2934.4L809.3,2906.3ZM858.6,3076.3L846.5,3089.0L810.3,2903.2L819.2,2875.3ZM871.9,3062.1L859.9,3074.8L820.2,2872.2L829.1,2844.3ZM885.2,3048.0L873.3,3060.7L830.0,2841.2L838.9,2813.5ZM898.5,3034.0L886.6,3046.6L839.8,2810.4L848.6,2782.8ZM911.8,3019.9L899.9,3032.5L849.6,2779.7L858.4,2752.2ZM925.1,3005.9L913.2,3018.5L859.3,2749.1L868.1,2721.7ZM938.3,2991.9L926.4,3004.5L869.0,2718.6L877.7,2691.3ZM951.5,2977.9L939.6,2990.5L878.7,2688.2L887.4,2661.0ZM964.7,2963.9L952.9,2976.5L888.3,2658.0L897.0,2630.8ZM977.9,2950.0L966.0,2962.5L897.9,2627.8L906.5,2600.8ZM991.0,2936.1L979.2,2948.6L907.5,2597.8L916.1,2570.8ZM1004.2,2922.2L992.4,2934.7L917.0,2567.8L925.5,2541.0ZM1017.3,2908.3L1005.5,2920.8L926.5,2538.0L935.0,2511.3ZM1030.4,2894.4L1018.6,2906.9L936.0,2508.3L944.4,2481.6ZM1043.4,2880.6L1031.7,2893.1L945.4,2478.7L953.8,2452.1ZM1056.5,2866.8L1044.7,2879.2L954.8,2449.2L963.2,2422.7ZM1069.5,2853.0L1057.8,2865.4L964.1,2419.8L972.5,2393.4ZM1082.5,2839.3L1070.8,2851.7L973.4,2390.5L981.8,2364.2ZM1095.5,2825.6L1083.8,2837.9L982.7,2361.3L991.0,2335.1ZM1108.4,2811.8L1096.8,2824.2L992.0,2332.2L1000.3,2306.1ZM1121.4,2798.1L1109.7,2810.5L1001.2,2303.2L1009.5,2277.2ZM1134.3,2784.5L1122.6,2796.8L1010.4,2274.4L1018.6,2248.5ZM1147.2,2770.8L1135.6,2783.1L1019.5,2245.6L1027.7,2219.8ZM1160.0,2757.2L1148.5,2769.5L1028.6,2216.9L1036.8,2191.2ZM1172.9,2743.6L1161.3,2755.9L1037.7,2188.3L1045.9,2162.7ZM1185.7,2730.0L1174.2,2742.3L1046.8,2159.9L1054.9,2134.3ZM1198.5,2716.5L1187.0,2728.7L1055.8,2131.5L1063.9,2106.1ZM1211.3,2702.9L1199.8,2715.1L1064.8,2103.2L1072.9,2077.9ZM1224.1,2689.4L1212.6,2701.6L1073.8,2075.1L1081.8,2049.8ZM1236.8,2675.9L1225.4,2688.1L1082.7,2047.0L1090.7,2021.8ZM1249.6,2662.5L1238.1,2674.6L1091.6,2019.0L1099.6,1993.9ZM1262.3,2649.0L1250.8,2661.1L1100.5,1991.1L1108.4,1966.1ZM1274.9,2635.6L1263.5,2647.7L1109.3,1963.4L1117.2,1938.4ZM1287.6,2622.2L1276.2,2634.3L1118.1,1935.7L1126.0,1910.9ZM1300.2,2608.8L1288.9,2620.9L1126.9,1908.1L1134.8,1883.4ZM1312.9,2595.5L1301.5,2607.5L1135.6,1880.6L1143.5,1856.0ZM1325.5,2582.1L1314.1,2594.1L1144.3,1853.2L1152.2,1828.6ZM1338.1,2568.8L1326.7,2580.8L1153.0,1825.9L1160.8,1801.4ZM1350.6,2555.5L1339.3,2567.5L1161.7,1798.7L1169.4,1774.3ZM1363.2,2542.2L1351.9,2554.2L1170.3,1771.6L1178.0,1747.3ZM1375.7,2529.0L1364.4,2540.9L1178.9,1744.6L1186.6,1720.4ZM1388.2,2515.8L1376.9,2527.7L1187.5,1717.7L1195.1,1693.5ZM1400.7,2502.6L1389.4,2514.4L1196.0,1690.8L1203.6,1666.8ZM1413.1,2489.4L1401.9,2501.2L1204.5,1664.1L1212.1,1640.1ZM1425.6,2476.2L1414.4,2488.0L1213.0,1637.4L1220.6,1613.5ZM1438.0,2463.1L1426.8,2474.9L1221.4,1610.9L1229.0,1587.1ZM1450.4,2449.9L1439.2,2461.7L1229.8,1584.4L1237.4,1560.7ZM1462.8,2436.8L1451.6,2448.6L1238.2,1558.1L1245.8,1534.4ZM1475.1,2423.7L1464.0,2435.5L1246.6,1531.8L1254.1,1508.2ZM1487.5,2410.7L1476.4,2422.4L1254.9,1505.6L1262.4,1482.1ZM1499.8,2397.6L1488.7,2409.4L1263.2,1479.5L1270.7,1456.0ZM1512.1,2384.6L1501.0,2396.3L1271.5,1453.4L1278.9,1430.1ZM1524.4,2371.6L1513.3,2383.3L1279.8,1427.5L1287.2,1404.2ZM1536.6,2358.6L1525.6,2370.3L1288.0,1401.7L1295.4,1378.5ZM1548.9,2345.7L1537.9,2357.3L1296.2,1375.9L1303.5,1352.8ZM1561.1,2332.7L1550.1,2344.4L1304.3,1350.2L1311.7,1327.2ZM1573.3,2319.8L1562.3,2331.5L1312.5,1324.6L1319.8,1301.7ZM1585.5,2306.9L1574.5,2318.5L1320.6,1299.1L1327.9,1276.3ZM1597.7,2294.1L1586.7,2305.6L1328.7,1273.7L1335.9,1250.9ZM1609.8,2281.2L1598.9,2292.8L1336.7,1248.4L1344.0,1225.7ZM1621.9,2268.4L1611.0,2279.9L1344.8,1223.2L1352.0,1200.5ZM1634.1,2255.6L1623.2,2267.1L1352.8,1198.0L1359.9,1175.4ZM1646.1,2242.8L1635.3,2254.3L1360.7,1172.9L1367.9,1150.4ZM1658.2,2230.0L1647.4,2241.5L1368.7,1147.9L1375.8,1125.5ZM1670.3,2217.2L1659.4,2228.7L1376.6,1123.0L1383.7,1100.7ZM1682.3,2204.5L1671.5,2216.0L1384.5,1098.2L1391.6,1075.9ZM1694.3,2191.8L1683.5,2203.2L1392.4,1073.4L1399.5,1051.2ZM1706.3,2179.1L1695.5,2190.5L1400.2,1048.8L1407.3,1026.6ZM1718.3,2166.4L1707.5,2177.8L1408.1,1024.2L1415.1,1002.1ZM1730.2,2153.8L1719.5,2165.1L1415.9,999.7L1422.8,977.7ZM1742.2,2141.1L1731.4,2152.5L1423.6,975.3L1430.6,953.3ZM1754.1,2128.5L1743.4,2139.9L1431.4,950.9L1438.3,929.1ZM1766.0,2115.9L1755.3,2127.3L1439.1,926.6L1446.0,904.9ZM1777.9,2103.3L1767.2,2114.7L1446.8,902.5L1453.7,880.8ZM1789.7,2090.8L1779.1,2102.1L1454.4,878.4L1461.3,856.7ZM1801.6,2078.3L1790.9,2089.5L1462.1,854.3L1468.9,832.8ZM1813.4,2065.7L1802.8,2077.0L1469.7,830.4L1476.5,808.9ZM1825.2,2053.2L1814.6,2064.5L1477.3,806.5L1484.1,785.1ZM1837.0,2040.8L1826.4,2052.0L1484.9,782.7L1491.7,761.4ZM1848.8,2028.3L1838.2,2039.5L1492.4,759.0L1499.2,737.7ZM1860.5,2015.9L1850.0,2027.1L1499.9,735.3L1506.7,714.1ZM1872.3,2003.5L1861.7,2014.6L1507.4,711.8L1514.2,690.6ZM1884.0,1991.1L1873.4,2002.2L1514.9,688.3L1521.6,667.2ZM1895.7,1978.7L1885.2,1989.8L1522.4,664.9L1529.0,643.9ZM1907.4,1966.3L1896.8,1977.4L1529.8,641.5L1536.4,620.6ZM1919.0,1954.0L1908.5,1965.1L1537.2,618.3L1543.8,597.4ZM1930.7,1941.6L1920.2,1952.7L1544.6,595.1L1551.2,574.3ZM1942.3,1929.3L1931.8,1940.4L1551.9,572.0L1558.5,551.2ZM1562.7,538.2L1569.7,542.1L1953.9,1917.1L1943.4,1928.1L1559.2,548.9ZM1571.3,543.0L1585.9,551.1L1965.5,1904.8L1955.1,1915.8ZM1587.6,552.0L1602.2,560.1L1977.1,1892.6L1966.6,1903.6ZM1603.8,561.0L1618.5,569.2L1988.6,1880.3L1978.2,1891.3ZM1620.1,570.1L1634.8,578.2L2000.1,1868.1L1989.8,1879.1ZM1636.4,579.1L1651.1,587.3L2011.7,1855.9L2001.3,1866.9ZM1652.8,588.2L1667.5,596.4L2023.2,1843.8L2012.8,1854.7ZM1669.1,597.3L1683.9,605.5L2034.6,1831.6L2024.3,1842.5ZM1685.5,606.4L1700.3,614.6L2046.1,1819.5L2035.8,1830.4ZM1701.9,615.5L1716.7,623.7L2057.6,1807.4L2047.3,1818.3ZM1718.3,624.6L1733.1,632.8L2069.0,1795.3L2058.7,1806.1ZM1734.8,633.7L1749.6,641.9L2080.4,1783.2L2070.1,1794.1ZM1751.2,642.9L1766.1,651.1L2091.8,1771.1L2081.5,1782.0ZM1767.7,652.0L1782.6,660.3L2103.2,1759.1L2092.9,1769.9ZM1784.2,661.2L1799.1,669.4L2114.5,1747.1L2104.3,1757.9ZM1800.7,670.3L1815.6,678.6L2125.9,1735.1L2115.7,1745.9ZM1817.3,679.5L1832.2,687.8L2137.2,1723.1L2127.0,1733.9ZM1833.8,688.7L1848.8,697.0L2148.5,1711.1L2138.3,1721.9ZM1850.4,697.9L1865.4,706.2L2159.8,1699.2L2149.6,1709.9ZM1867.0,707.2L1882.0,715.5L2171.1,1687.2L2160.9,1698.0ZM1883.6,716.4L1898.6,724.7L2182.3,1675.3L2172.2,1686.0ZM1900.3,725.6L1915.3,734.0L2193.6,1663.4L2183.4,1674.1ZM1917.0,734.9L1932.0,743.2L2204.8,1651.6L2194.7,1662.2ZM1933.6,744.1L1948.7,752.5L2216.0,1639.7L2205.9,1650.4ZM1950.4,753.4L1965.4,761.8L2227.2,1627.9L2217.1,1638.5ZM1967.1,762.7L1982.2,771.1L2238.3,1616.0L2228.3,1626.7ZM1983.8,772.0L1998.9,780.4L2249.5,1604.2L2239.5,1614.9ZM2000.6,781.3L2015.7,789.7L2260.6,1592.4L2250.6,1603.1ZM2017.4,790.7L2032.5,799.1L2271.7,1580.7L2261.7,1591.3ZM2034.2,800.0L2049.4,808.4L2282.8,1568.9L2272.9,1579.5ZM2051.1,809.3L2066.2,817.8L2293.9,1557.2L2284.0,1567.8ZM2067.9,818.7L2083.1,827.1L2305.0,1545.5L2295.0,1556.0ZM2084.8,828.1L2100.0,836.5L2316.1,1533.8L2306.1,1544.3ZM2101.7,837.5L2116.9,845.9L2327.1,1522.1L2317.2,1532.6ZM2118.6,846.9L2133.9,855.3L2338.1,1510.4L2328.2,1520.9ZM2135.6,856.3L2150.9,864.7L2349.1,1498.8L2339.2,1509.3ZM2152.5,865.7L2167.8,874.2L2360.1,1487.2L2350.2,1497.6ZM2169.5,875.1L2184.8,883.6L2371.1,1475.6L2361.2,1486.0ZM2186.5,884.6L2201.9,893.1L2382.0,1464.0L2372.2,1474.4ZM2203.6,894.0L2218.9,902.5L2392.9,1452.4L2383.1,1462.8ZM2220.6,903.5L2236.0,912.0L2403.9,1440.8L2394.0,1451.2ZM2237.7,913.0L2253.1,921.5L2414.8,1429.3L2405.0,1439.7ZM2254.8,922.5L2270.2,931.0L2425.7,1417.8L2415.9,1428.2ZM2271.9,932.0L2287.4,940.5L2436.5,1406.3L2426.7,1416.6ZM2289.1,941.5L2304.5,950.1L2447.4,1394.8L2437.6,1405.1ZM2306.2,951.0L2321.7,959.6L2458.2,1383.3L2448.5,1393.7ZM2323.4,960.6L2338.9,969.2L2469.0,1371.9L2459.3,1382.2ZM2340.6,970.1L2356.1,978.7L2479.8,1360.4L2470.1,1370.7ZM2357.9,979.7L2373.4,988.3L2490.6,1349.0L2480.9,1359.3ZM2375.1,989.3L2390.7,997.9L2501.4,1337.6L2491.7,1347.9ZM2392.4,998.9L2408.0,1007.5L2512.2,1326.2L2502.5,1336.5ZM2409.7,1008.5L2425.3,1017.1L2522.9,1314.9L2513.2,1325.1ZM2427.0,1018.1L2442.6,1026.7L2533.6,1303.5L2524.0,1313.7ZM2444.4,1027.7L2460.0,1036.4L2544.3,1292.2L2534.7,1302.4ZM2461.7,1037.3L2477.4,1046.0L2555.0,1280.9L2545.4,1291.1ZM2479.1,1047.0L2494.8,1055.7L2565.7,1269.6L2556.1,1279.7ZM2496.5,1056.7L2512.2,1065.4L2576.4,1258.3L2566.8,1268.4ZM2513.9,1066.3L2529.7,1075.1L2587.0,1247.0L2577.4,1257.2ZM2531.4,1076.0L2547.1,1084.8L2597.6,1235.8L2588.1,1245.9ZM2548.9,1085.7L2564.6,1094.5L2608.3,1224.5L2598.7,1234.6ZM2566.4,1095.5L2582.2,1104.2L2618.9,1213.3L2609.3,1223.4ZM2583.9,1105.2L2599.7,1114.0L2629.4,1202.1L2619.9,1212.2ZM2601.4,1114.9L2617.3,1123.7L2640.0,1190.9L2630.5,1201.0ZM2619.0,1124.7L2634.8,1133.5L2650.6,1179.8L2641.1,1189.8ZM2636.6,1134.5L2652.5,1143.3L2661.1,1168.6L2651.6,1178.7ZM2654.2,1144.2L2670.1,1153.0L2671.6,1157.5L2662.1,1167.5ZM2671.9,1154.0L2673.8,1155.1L2672.7,1156.4Z" fill="#d89a28"/><path d="M708.6,3234.9L702.9,3241.1L707.2,3227.3ZM722.2,3220.5L713.3,3230.0L710.7,3216.3L717.5,3195.0ZM735.8,3206.2L726.9,3215.7L721.0,3184.1L727.7,3162.9ZM749.4,3191.8L740.4,3201.3L731.2,3152.0L737.9,3130.9ZM762.9,3177.5L754.0,3187.0L741.4,3120.0L748.0,3099.0ZM776.4,3163.2L767.5,3172.7L751.5,3088.2L758.2,3067.2ZM789.9,3148.9L781.0,3158.4L761.6,3056.4L768.2,3035.5ZM803.3,3134.7L794.5,3144.1L771.6,3024.8L778.3,3004.0ZM816.8,3120.5L807.9,3129.9L781.7,2993.3L788.3,2972.6ZM830.2,3106.3L821.3,3115.7L791.7,2961.9L798.2,2941.3ZM843.6,3092.1L834.8,3101.5L801.6,2930.7L808.1,2910.1ZM857.0,3078.0L848.1,3087.3L811.5,2899.5L818.0,2879.0ZM870.3,3063.8L861.5,3073.2L821.4,2868.5L827.9,2848.0ZM883.6,3049.7L874.9,3059.0L831.2,2837.5L837.7,2817.2ZM896.9,3035.6L888.2,3044.9L841.0,2806.7L847.5,2786.5ZM910.2,3021.6L901.5,3030.9L850.8,2776.0L857.2,2755.8ZM923.5,3007.6L914.7,3016.8L860.5,2745.4L866.9,2725.3ZM936.7,2993.5L928.0,3002.8L870.2,2715.0L876.6,2694.9ZM949.9,2979.6L941.2,2988.8L879.9,2684.6L886.2,2664.6ZM963.1,2965.6L954.4,2974.8L889.5,2654.4L895.8,2634.5ZM976.3,2951.6L967.6,2960.8L899.1,2624.2L905.4,2604.4ZM989.5,2937.7L980.8,2946.9L908.6,2594.2L914.9,2574.4ZM1002.6,2923.8L993.9,2933.0L918.1,2564.3L924.4,2544.6ZM1015.7,2910.0L1007.1,2919.1L927.6,2534.4L933.9,2514.8ZM1028.8,2896.1L1020.2,2905.2L937.1,2504.7L943.3,2485.2ZM1041.9,2882.3L1033.2,2891.4L946.5,2475.1L952.7,2455.7ZM1054.9,2868.5L1046.3,2877.6L955.9,2445.7L962.1,2426.2ZM1067.9,2854.7L1059.3,2863.8L965.2,2416.3L971.4,2396.9ZM1080.9,2840.9L1072.4,2850.0L974.5,2387.0L980.7,2367.7ZM1093.9,2827.2L1085.3,2836.3L983.8,2357.8L989.9,2338.6ZM1106.9,2813.5L1098.3,2822.5L993.1,2328.7L999.2,2309.6ZM1119.8,2799.8L1111.3,2808.8L1002.3,2299.8L1008.4,2280.7ZM1132.7,2786.1L1124.2,2795.1L1011.5,2270.9L1017.5,2251.9ZM1145.6,2772.5L1137.1,2781.5L1020.6,2242.1L1026.6,2223.2ZM1158.5,2758.8L1150.0,2767.8L1029.7,2213.5L1035.7,2194.6ZM1171.3,2745.2L1162.9,2754.2L1038.8,2184.9L1044.8,2166.1ZM1184.2,2731.7L1175.7,2740.6L1047.9,2156.5L1053.8,2137.7ZM1197.0,2718.1L1188.5,2727.1L1056.9,2128.1L1062.8,2109.4ZM1209.8,2704.6L1201.3,2713.5L1065.9,2099.8L1071.8,2081.2ZM1222.5,2691.1L1214.1,2700.0L1074.8,2071.7L1080.7,2053.2ZM1235.3,2677.6L1226.9,2686.5L1083.8,2043.6L1089.6,2025.2ZM1248.0,2664.1L1239.6,2673.0L1092.7,2015.7L1098.5,1997.3ZM1260.7,2650.6L1252.3,2659.5L1101.5,1987.8L1107.4,1969.5ZM1273.4,2637.2L1265.0,2646.1L1110.4,1960.0L1116.2,1941.8ZM1286.1,2623.8L1277.7,2632.7L1119.2,1932.4L1125.0,1914.2ZM1298.7,2610.4L1290.4,2619.3L1127.9,1904.8L1133.7,1886.7ZM1311.4,2597.1L1303.0,2605.9L1136.7,1877.3L1142.4,1859.2ZM1324.0,2583.7L1315.6,2592.5L1145.4,1849.9L1151.1,1831.9ZM1336.5,2570.4L1328.2,2579.2L1154.1,1822.7L1159.8,1804.7ZM1349.1,2557.1L1340.8,2565.9L1162.7,1795.5L1168.4,1777.6ZM1361.7,2543.8L1353.4,2552.6L1171.3,1768.4L1177.0,1750.5ZM1374.2,2530.6L1365.9,2539.3L1179.9,1741.4L1185.6,1723.6ZM1386.7,2517.3L1378.4,2526.1L1188.5,1714.4L1194.1,1696.7ZM1399.2,2504.1L1390.9,2512.9L1197.0,1687.6L1202.6,1670.0ZM1411.6,2490.9L1403.4,2499.7L1205.5,1660.9L1211.1,1643.3ZM1424.1,2477.8L1415.9,2486.5L1214.0,1634.3L1219.6,1616.7ZM1436.5,2464.6L1428.3,2473.3L1222.4,1607.7L1228.0,1590.2ZM1448.9,2451.5L1440.7,2460.2L1230.8,1581.3L1236.4,1563.8ZM1461.3,2438.4L1453.1,2447.0L1239.2,1554.9L1244.8,1537.5ZM1473.7,2425.3L1465.5,2433.9L1247.6,1528.6L1253.1,1511.3ZM1486.0,2412.2L1477.8,2420.9L1255.9,1502.4L1261.4,1485.2ZM1498.3,2399.2L1490.2,2407.8L1264.2,1476.3L1269.7,1459.2ZM1510.6,2386.2L1502.5,2394.8L1272.5,1450.3L1277.9,1433.2ZM1522.9,2373.2L1514.8,2381.8L1280.7,1424.4L1286.2,1407.3ZM1535.2,2360.2L1527.1,2368.8L1289.0,1398.6L1294.4,1381.6ZM1547.4,2347.2L1539.3,2355.8L1297.2,1372.8L1302.5,1355.9ZM1559.6,2334.3L1551.6,2342.8L1305.3,1347.2L1310.7,1330.3ZM1571.9,2321.4L1563.8,2329.9L1313.5,1321.6L1318.8,1304.8ZM1584.0,2308.5L1576.0,2317.0L1321.6,1296.1L1326.9,1279.3ZM1596.2,2295.6L1588.2,2304.1L1329.6,1270.7L1335.0,1254.0ZM1608.4,2282.7L1600.3,2291.2L1337.7,1245.4L1343.0,1228.7ZM1620.5,2269.9L1612.5,2278.4L1345.7,1220.1L1351.0,1203.5ZM1632.6,2257.1L1624.6,2265.5L1353.7,1195.0L1359.0,1178.4ZM1644.7,2244.3L1636.7,2252.7L1361.7,1169.9L1366.9,1153.4ZM1656.8,2231.5L1648.8,2239.9L1369.6,1144.9L1374.9,1128.5ZM1668.8,2218.8L1660.9,2227.2L1377.6,1120.0L1382.8,1103.6ZM1680.9,2206.0L1672.9,2214.4L1385.5,1095.2L1390.7,1078.9ZM1692.9,2193.3L1684.9,2201.7L1393.3,1070.5L1398.5,1054.2ZM1704.9,2180.6L1697.0,2189.0L1401.2,1045.8L1406.3,1029.6ZM1716.8,2167.9L1708.9,2176.3L1409.0,1021.2L1414.1,1005.1ZM1728.8,2155.3L1720.9,2163.6L1416.8,996.7L1421.9,980.6ZM1740.7,2142.6L1732.9,2151.0L1424.6,972.3L1429.7,956.3ZM1752.7,2130.0L1744.8,2138.3L1432.3,948.0L1437.4,932.0ZM1764.6,2117.4L1756.7,2125.7L1440.0,923.7L1445.1,907.8ZM1776.5,2104.9L1768.6,2113.1L1447.7,899.6L1452.8,883.7ZM1788.3,2092.3L1780.5,2100.6L1455.4,875.5L1460.4,859.6ZM1800.2,2079.8L1792.3,2088.0L1463.0,851.4L1468.0,835.6ZM1812.0,2067.2L1804.2,2075.5L1470.6,827.5L1475.6,811.7ZM1823.8,2054.7L1816.0,2063.0L1478.2,803.6L1483.2,787.9ZM1835.6,2042.3L1827.8,2050.5L1485.8,779.9L1490.8,764.2ZM1847.4,2029.8L1839.6,2038.0L1493.3,756.1L1498.3,740.5ZM1859.1,2017.4L1851.4,2025.6L1500.8,732.5L1505.8,717.0ZM1870.9,2004.9L1863.1,2013.1L1508.3,709.0L1513.3,693.4ZM1882.6,1992.5L1874.8,2000.7L1515.8,685.5L1520.7,670.0ZM1894.3,1980.2L1886.6,1988.3L1523.2,662.1L1528.2,646.7ZM1906.0,1967.8L1898.3,1976.0L1530.7,638.7L1535.6,623.4ZM1917.6,1955.5L1909.9,1963.6L1538.1,615.5L1542.9,600.2ZM1929.3,1943.1L1921.6,1951.3L1545.4,592.3L1550.3,577.0ZM1940.9,1930.8L1933.2,1938.9L1552.8,569.2L1557.6,554.0ZM1562.7,538.2L1567.7,541.0L1952.5,1918.5L1944.8,1926.6L1560.1,546.2ZM1573.3,544.1L1584.0,550.0L1964.1,1906.3L1956.4,1914.4ZM1589.5,553.1L1600.3,559.0L1975.7,1894.0L1968.0,1902.1ZM1605.8,562.1L1616.5,568.1L1987.2,1881.8L1979.6,1889.9ZM1622.1,571.2L1632.9,577.1L1998.8,1869.6L1991.1,1877.6ZM1638.4,580.2L1649.2,586.2L2010.3,1857.4L2002.7,1865.4ZM1654.7,589.3L1665.5,595.3L2021.8,1845.2L2014.2,1853.2ZM1671.1,598.4L1681.9,604.4L2033.3,1833.1L2025.7,1841.1ZM1687.5,607.5L1698.3,613.5L2044.7,1820.9L2037.2,1828.9ZM1703.9,616.6L1714.7,622.6L2056.2,1808.8L2048.6,1816.8ZM1720.3,625.7L1731.1,631.7L2067.6,1796.7L2060.1,1804.7ZM1736.7,634.8L1747.6,640.8L2079.0,1784.6L2071.5,1792.6ZM1753.2,644.0L1764.1,650.0L2090.4,1772.6L2082.9,1780.5ZM1769.7,653.1L1780.6,659.2L2101.8,1760.5L2094.3,1768.5ZM1786.2,662.3L1797.1,668.3L2113.2,1748.5L2105.7,1756.4ZM1802.7,671.4L1813.6,677.5L2124.5,1736.5L2117.0,1744.4ZM1819.3,680.6L1830.2,686.7L2135.8,1724.5L2128.4,1732.4ZM1835.8,689.8L1846.8,695.9L2147.1,1712.5L2139.7,1720.4ZM1852.4,699.0L1863.4,705.1L2158.4,1700.6L2151.0,1708.5ZM1869.0,708.3L1880.0,714.4L2169.7,1688.7L2162.3,1696.5ZM1885.6,717.5L1896.6,723.6L2181.0,1676.7L2173.5,1684.6ZM1902.3,726.7L1913.3,732.8L2192.2,1664.9L2184.8,1672.7ZM1919.0,736.0L1930.0,742.1L2203.4,1653.0L2196.0,1660.8ZM1935.7,745.3L1946.7,751.4L2214.6,1641.1L2207.2,1648.9ZM1952.4,754.5L1963.4,760.7L2225.8,1629.3L2218.4,1637.1ZM1969.1,763.8L1980.2,770.0L2237.0,1617.5L2229.6,1625.3ZM1985.9,773.1L1996.9,779.3L2248.2,1605.6L2240.8,1613.4ZM2002.6,782.5L2013.7,788.6L2259.3,1593.9L2251.9,1601.6ZM2019.4,791.8L2030.5,797.9L2270.4,1582.1L2263.1,1589.9ZM2036.2,801.1L2047.4,807.3L2281.5,1570.3L2274.2,1578.1ZM2053.1,810.5L2064.2,816.6L2292.6,1558.6L2285.3,1566.3ZM2070.0,819.8L2081.1,826.0L2303.7,1546.9L2296.4,1554.6ZM2086.8,829.2L2098.0,835.4L2314.7,1535.2L2307.4,1542.9ZM2103.7,838.6L2114.9,844.8L2325.8,1523.5L2318.5,1531.2ZM2120.7,848.0L2131.9,854.2L2336.8,1511.8L2329.5,1519.5ZM2137.6,857.4L2148.8,863.6L2347.8,1500.2L2340.5,1507.9ZM2154.6,866.8L2165.8,873.0L2358.8,1488.6L2351.5,1496.2ZM2171.6,876.3L2182.8,882.5L2369.7,1477.0L2362.5,1484.6ZM2188.6,885.7L2199.8,891.9L2380.7,1465.4L2373.5,1473.0ZM2205.6,895.2L2216.9,901.4L2391.6,1453.8L2384.4,1461.4ZM2222.7,904.6L2234.0,910.9L2402.6,1442.2L2395.4,1449.9ZM2239.8,914.1L2251.0,920.4L2413.5,1430.7L2406.3,1438.3ZM2256.9,923.6L2268.2,929.9L2424.4,1419.2L2417.2,1426.8ZM2274.0,933.1L2285.3,939.4L2435.2,1407.7L2428.0,1415.3ZM2291.1,942.6L2302.5,948.9L2446.1,1396.2L2438.9,1403.8ZM2308.3,952.2L2319.6,958.5L2456.9,1384.7L2449.8,1392.3ZM2325.5,961.7L2336.8,968.0L2467.7,1373.2L2460.6,1380.8ZM2342.7,971.3L2354.1,977.6L2478.5,1361.8L2471.4,1369.4ZM2359.9,980.8L2371.3,987.2L2489.3,1350.4L2482.2,1357.9ZM2377.2,990.4L2388.6,996.7L2500.1,1339.0L2493.0,1346.5ZM2394.5,1000.0L2405.9,1006.3L2510.9,1327.6L2503.8,1335.1ZM2411.8,1009.6L2423.2,1016.0L2521.6,1316.2L2514.5,1323.7ZM2429.1,1019.2L2440.5,1025.6L2532.3,1304.9L2525.3,1312.4ZM2446.4,1028.9L2457.9,1035.2L2543.1,1293.5L2536.0,1301.0ZM2463.8,1038.5L2475.3,1044.9L2553.7,1282.2L2546.7,1289.7ZM2481.2,1048.2L2492.7,1054.5L2564.4,1270.9L2557.4,1278.4ZM2498.6,1057.8L2510.1,1064.2L2575.1,1259.6L2568.1,1267.1ZM2516.0,1067.5L2527.6,1073.9L2585.7,1248.4L2578.7,1255.8ZM2533.5,1077.2L2545.0,1083.6L2596.4,1237.1L2589.4,1244.5ZM2551.0,1086.9L2562.5,1093.3L2607.0,1225.9L2600.0,1233.3ZM2568.5,1096.6L2580.0,1103.0L2617.6,1214.7L2610.6,1222.1ZM2586.0,1106.4L2597.6,1112.8L2628.2,1203.5L2621.2,1210.9ZM2603.6,1116.1L2615.2,1122.5L2638.7,1192.3L2631.8,1199.7ZM2621.1,1125.9L2632.7,1132.3L2649.3,1181.1L2642.3,1188.5ZM2638.7,1135.6L2650.3,1142.1L2659.8,1170.0L2652.9,1177.3ZM2656.3,1145.4L2668.0,1151.9L2670.4,1158.8L2663.4,1166.2Z" fill="#fff843"/></g>
<path d="M1764.0,603.4L2497.3,1009.3L2505.0,995.4L1772.1,590.3Z" fill="#a3a3a3"/><path d="M1356.8,1284.4L1772.4,608.1L2490.9,1005.7L2097.7,1720.5ZM2452.0,1015.3L1783.0,644.2L1397.1,1274.5L2085.5,1678.8ZM2492.8,1005.2L2098.3,1722.5L1354.9,1284.9L1771.9,606.3ZM2097.7,1720.5L2490.9,1005.7L1772.4,608.1L1356.8,1284.4ZM2163.7,1086.9L2353.4,1193.8L2339.9,1218.2L2339.5,1218.0L2336.3,1224.0L2336.6,1224.2L2323.1,1248.7L2299.2,1235.2L2285.8,1259.3L2309.7,1272.9L2293.8,1301.8L2269.8,1288.1L2256.4,1312.4L2280.4,1326.0L2264.3,1355.1L2237.8,1340.0L2252.6,1313.3L2227.1,1298.8L2212.3,1325.4L2184.4,1309.5L2170.8,1333.8L2226.8,1365.8L2211.9,1392.7L2235.9,1406.5L2219.7,1435.9L2193.1,1420.6L2208.1,1393.7L2098.7,1330.9L2083.6,1357.6L2053.2,1340.2L2083.4,1286.9L2055.7,1271.0L2070.8,1244.6L2045.6,1230.2L2016.7,1280.7L2044.4,1296.6L2027.9,1325.6L1972.5,1293.7L1957.2,1320.4L1929.6,1304.4L1900.2,1355.4L1927.9,1371.5L1911.1,1400.8L1883.3,1384.7L1869.2,1409.2L1924.8,1441.6L1909.3,1468.7L1937.2,1485.0L1891.7,1565.0L1861.2,1547.1L1874.3,1524.2L1846.3,1507.9L1862.0,1480.6L1836.6,1465.7L1820.9,1493.0L1793.1,1476.7L1780.0,1499.4L1749.7,1481.6L1762.9,1458.9L1737.6,1444.1L1724.4,1466.8L1698.7,1451.6L1714.4,1424.8L1708.1,1421.1L1692.4,1448.0L1666.7,1432.9L1680.0,1410.3L1652.4,1394.2L1668.3,1367.3L1643.3,1352.7L1614.1,1402.0L1584.2,1384.4L1692.4,1202.9L1506.7,1095.5L1523.9,1067.4L1601.2,1112.0L1616.9,1086.1L1646.2,1102.9L1630.5,1128.9L1655.2,1143.1L1685.0,1093.5L1631.1,1062.5L1646.7,1036.8L1619.8,1021.5L1635.4,995.9L1611.0,982.0L1579.8,1033.1L1554.0,1018.3L1568.5,994.5L1569.5,995.0L1588.6,963.8L1587.7,963.2L1602.2,939.6L1625.6,952.9L1655.1,904.5L1631.7,891.3L1646.1,867.9L1647.0,868.4L1665.8,837.7L1664.9,837.2L1679.1,813.9L1862.5,917.2L1965.0,745.2L1994.1,761.3L1981.0,783.3L2005.4,796.9L2018.4,774.8L2043.4,788.6L2042.7,789.8L2048.7,793.1L2049.4,792.0L2074.4,805.8L2060.1,830.2L2006.5,800.4L1993.0,823.1L2019.9,838.0L2005.2,863.1L2056.7,891.8L2098.9,819.4L2124.0,833.3L2108.8,859.5L2114.9,862.9L2130.1,836.7L2155.3,850.7L2126.5,900.4L2099.5,885.3L2086.1,908.3L2140.4,938.6L2124.4,966.2L2043.0,920.6L2029.6,943.7L2056.7,958.9L2041.9,984.4L2069.1,999.7L2053.0,1027.5L2025.7,1012.2L2012.2,1035.6L2039.4,1050.9L1994.5,1128.5L2019.5,1142.7L2034.5,1116.7L2061.9,1132.3L2076.8,1106.3L2131.8,1137.4L2145.2,1113.7L2090.3,1082.7L2105.1,1056.9L2077.8,1041.5L2108.6,988.1L2135.9,1003.3L2150.5,977.8L2177.8,993.1L2205.6,944.5L2151.2,914.1L2179.9,864.4L2205.2,878.4L2190.0,904.7L2223.4,923.3L2238.5,896.8L2263.8,910.9ZM1851.7,1186.0L1820.9,1238.6L1845.9,1253.0L1861.3,1226.6L1891.2,1243.8L1875.8,1270.3L1928.5,1300.6L1942.4,1276.4L1914.9,1260.6L1930.2,1234.2L1875.3,1202.7L1890.6,1176.5L1863.2,1160.8L1878.5,1134.8L1853.7,1120.6L1824.4,1170.4ZM1857.9,1295.4L1872.0,1271.2L1846.9,1256.8L1832.9,1280.9ZM1975.3,1225.0L1946.2,1275.5L1971.4,1290.0L2000.4,1239.4ZM1933.2,1166.0L1908.2,1151.7L1894.3,1175.5L1919.3,1189.8ZM1978.1,1156.9L1949.2,1206.9L1974.2,1221.3L2003.1,1171.1ZM2114.7,1231.7L2170.2,1263.3L2185.1,1236.9L2212.9,1252.7L2241.0,1202.3L2213.3,1186.6L2228.0,1160.5L2202.8,1146.2L2158.5,1224.8L2128.3,1207.7L2143.2,1181.5L2090.5,1151.6L2076.9,1175.4L2104.5,1191.0L2074.5,1243.6L2099.8,1258.1ZM2311.3,1207.5L2258.2,1177.5L2244.8,1201.4L2298.0,1231.5ZM1754.5,1098.6L1702.9,1069.0L1688.7,1092.5L1740.4,1122.2ZM1797.0,1088.2L1772.3,1074.1L1758.3,1097.6L1783.0,1111.8ZM1758.3,1031.6L1773.6,1006.0L1719.8,975.4L1736.5,947.7L1763.3,962.9L1792.4,914.5L1688.1,855.6L1658.8,903.6L1683.1,917.4L1698.4,892.2L1727.5,908.6L1695.4,961.5L1668.7,946.3L1654.6,969.5L1681.4,984.7L1665.9,1010.3L1690.4,1024.2L1705.8,998.7L1735.1,1015.3L1719.7,1041.0L1771.3,1070.4L1785.2,1047.0ZM1883.1,1065.2L1910.2,1080.6L1998.8,929.5L1974.2,915.7L1944.4,966.4L1917.4,951.2L1887.3,1002.1L1857.9,985.5L1873.0,960.0L1821.6,931.0L1807.8,954.1L1834.7,969.3L1819.5,994.8L1846.5,1010.1L1829.9,1038.0L1802.9,1022.6L1789.0,1046.0L1867.9,1091.0ZM1791.2,981.8L1777.3,1005.1L1801.9,1019.0L1815.8,995.7ZM1920.4,885.5L1891.8,933.7L1916.3,947.6L1944.9,899.2ZM1949.7,1137.6L2008.4,1036.5L1983.6,1022.5L1938.5,1099.8L1911.3,1084.3L1897.5,1107.9ZM2013.4,971.4L1999.9,994.6L2024.6,1008.6L2038.2,985.3ZM2133.8,1070.1L2161.9,1020.9L2137.0,1007.0L2108.9,1056.0ZM1779.3,1179.5L1808.8,1129.6L1784.0,1115.5L1754.5,1165.2ZM1822.0,1421.0L1796.8,1406.3L1766.7,1458.0L1792.0,1472.8ZM1813.8,1377.0L1839.0,1391.6L1853.2,1367.1L1828.0,1352.5ZM1936.6,858.1L1988.0,886.9L2001.5,864.0L1950.1,835.3ZM1739.1,1372.6L1711.6,1356.6L1743.0,1303.2L1690.7,1272.8L1660.6,1323.6L1688.0,1339.6L1672.1,1366.4L1724.8,1397.1ZM1801.6,1266.0L1776.6,1251.6L1746.8,1302.2L1771.9,1316.8ZM1698.8,1136.3L1684.6,1160.1L1709.4,1174.3L1723.5,1150.5ZM1765.7,1212.3L1793.0,1228.1L1811.9,1195.8L1805.8,1192.3L1790.3,1218.6L1735.8,1187.1L1732.2,1193.0L1720.2,1213.4L1701.0,1245.7L1734.5,1265.1ZM1785.6,1366.2L1816.8,1312.8L1872.0,1344.7L1890.9,1312.0L1884.7,1308.4L1869.2,1335.1L1814.1,1303.1L1782.9,1356.5L1755.4,1340.5L1751.9,1346.6L1779.4,1362.6L1748.0,1416.4L1754.2,1420.1L1773.5,1387.0ZM1880.9,1457.8L1884.4,1451.7L1850.3,1431.8L1846.8,1437.9ZM1890.4,1491.5L1886.9,1497.7L1893.2,1501.4L1896.7,1495.2ZM2126.7,1271.0L2123.3,1277.0L2111.7,1297.5L2108.3,1303.6L2142.4,1323.1L2160.8,1290.5ZM2037.3,1185.1L2052.3,1159.0L2046.1,1155.5L2042.7,1161.4L2031.1,1181.6L2012.6,1213.8L2018.8,1217.3L2033.9,1191.1L2061.5,1206.8L2064.9,1200.8ZM1821.2,1104.4L1827.3,1107.9L1830.8,1102.0L1824.6,1098.5ZM1674.1,1047.1L1670.6,1052.9L1676.7,1056.4L1680.2,1050.6ZM1965.8,813.1L1969.1,807.5L1963.1,804.1L1959.7,809.7ZM2020.2,902.6L2014.1,899.2L2010.8,904.9L2016.9,908.3ZM2179.4,1127.6L2173.2,1124.1L2155.1,1156.0L2161.3,1159.6ZM2257.5,1248.7L2260.9,1242.7L2254.6,1239.2L2236.5,1271.6L2242.8,1275.2L2246.1,1269.2ZM2193.8,1282.2L2200.1,1285.8L2203.5,1279.8L2197.2,1276.2ZM1958.4,1573.6L1930.3,1557.1L1978.2,1472.6L2008.7,1490.4L1993.3,1517.7L2018.9,1532.6L2049.6,1478.0L2077.7,1494.3L2091.6,1469.5L2063.5,1453.2L2110.3,1369.9L2140.8,1387.4L2125.7,1414.3L2153.8,1430.5L2138.7,1457.6L2191.0,1487.8L2174.6,1517.6L2150.4,1503.6L2136.6,1528.5L2160.8,1542.5L2146.7,1568.1L2146.3,1567.9L2131.0,1595.5L2102.7,1579.0L2083.9,1612.9L2112.3,1629.5L2085.1,1678.6L2058.6,1663.1L2071.5,1639.9L2045.7,1624.7L2032.8,1647.9L2001.9,1629.8L2030.3,1579.0L1976.5,1547.5L1962.3,1572.6L1990.5,1589.1L1976.2,1614.6L1945.5,1596.6ZM2118.9,1554.5L2132.7,1529.5L2078.8,1498.2L2064.9,1523.1ZM2095.4,1468.5L2121.1,1483.4L2134.9,1458.6L2109.3,1443.8ZM2073.9,1568.0L2048.2,1553.0L2034.2,1578.0L2059.9,1593.1ZM2342.8,1156.5L2202.1,1077.5L2275.9,947.2L2415.8,1024.9ZM2370.2,1036.1L2290.1,991.5L2248.0,1066.2L2328.3,1111.3ZM2022.7,1465.6L1936.4,1415.5L1983.8,1332.5L2069.8,1382.1ZM1983.5,1403.7L2008.9,1418.4L2022.8,1393.8L1997.5,1379.2ZM1716.2,804.3L1792.9,678.7L1927.6,753.7L1851.8,880.5ZM1882.5,764.5L1805.3,721.4L1761.6,793.4L1839.0,836.9ZM1434.3,1266.3L1515.8,1132.8L1653.3,1212.5L1572.6,1347.4ZM1606.6,1224.0L1527.8,1178.2L1481.3,1254.8L1560.3,1301.0Z" fill="#2c2608" fill-rule="evenodd"/><g filter="url(#bl)"><path d="M1357.8,1284.2L1772.7,609.0L2489.9,1005.9L2097.4,1719.5ZM2472.4,1010.2L1777.5,625.2L1375.9,1279.7L2091.9,1700.7ZM1377.9,1279.2L1778.0,627.0L2470.5,1010.7L2091.3,1698.6ZM2453.0,1015.0L1782.7,643.3L1396.1,1274.7L2085.8,1679.9Z" fill="#d89a28" fill-rule="evenodd"/><path d="M1360.2,1283.6L1773.3,611.1L2487.6,1006.5L2096.7,1717.0ZM2474.8,1009.7L1776.8,623.0L1373.5,1280.3L2092.6,1703.2ZM1380.4,1278.6L1778.6,629.2L2468.2,1011.3L2090.6,1696.1ZM2455.3,1014.4L1782.1,641.1L1393.6,1275.3L2086.5,1682.4Z" fill="#fff843" fill-rule="evenodd"/><path d="M2491.8,1005.5L2098.0,1721.5L1355.9,1284.6L1772.2,607.2ZM2097.7,1720.5L2490.9,1005.7L1772.4,608.1L1356.8,1284.4ZM2342.5,1155.6L2203.1,1077.2L2276.2,948.2L2414.8,1025.2ZM2336.9,1138.1L2397.3,1029.5L2281.7,965.2L2220.8,1072.9ZM2022.4,1464.6L1937.4,1415.2L1984.1,1333.5L2068.8,1382.3ZM2017.1,1446.4L2050.7,1386.9L1989.4,1351.5L1955.6,1410.7ZM1717.2,804.1L1793.1,679.7L1926.7,753.9L1851.5,879.6ZM1734.7,799.9L1846.6,862.8L1909.3,758.0L1797.9,696.1ZM1435.3,1266.1L1516.0,1133.8L1652.3,1212.7L1572.4,1346.4ZM1453.4,1261.6L1567.6,1328.5L1634.3,1217.1L1520.7,1151.2ZM2145.1,1091.5L2251.8,904.2L2263.2,910.5L2162.7,1087.2L2353.1,1194.4L2347.0,1205.4ZM1882.1,1156.2L1887.6,1159.4L1902.9,1133.3L1952.0,1161.3L1924.7,1208.4L1897.3,1192.7L1894.2,1198.0L1949.1,1229.5L1933.8,1255.9L1939.4,1259.1L1957.8,1227.3L1930.3,1211.6L1972.7,1138.5L2021.9,1166.5L1991.8,1218.9L2019.3,1234.7L1989.0,1287.6L2022.4,1306.8L2025.4,1301.3L1997.8,1285.4L2040.0,1211.6L2067.6,1227.3L2085.7,1195.7L2058.1,1180.0L2084.9,1133.1L2162.0,1176.8L2147.2,1203.0L2152.8,1206.2L2197.1,1127.8L2246.7,1155.8L2232.1,1182.0L2237.7,1185.2L2252.4,1159.0L2330.1,1202.8L2315.5,1229.1L2329.5,1237.1L2323.4,1248.1L2298.9,1234.2L2284.8,1259.5L2309.4,1273.5L2303.3,1284.6L2267.0,1264.0L2281.7,1237.6L2248.1,1218.6L2218.7,1271.4L2190.8,1255.5L2176.0,1282.0L2120.4,1250.3L2105.4,1276.8L2077.7,1260.9L2074.6,1266.3L2102.4,1282.2L2072.3,1335.4L2077.9,1338.7L2093.0,1312.0L2204.7,1376.1L2207.8,1370.6L2151.8,1338.5L2178.6,1290.7L2206.5,1306.6L2221.3,1280.0L2249.2,1295.9L2264.0,1269.4L2300.3,1290.0L2294.1,1301.1L2269.5,1287.2L2255.4,1312.6L2280.0,1326.7L2273.8,1337.9L2259.8,1329.8L2256.8,1335.3L2270.8,1343.3L2264.6,1354.5L2238.8,1339.8L2253.6,1313.1L2226.8,1297.8L2212.0,1324.4L2184.1,1308.5L2169.8,1334.0L2225.8,1366.1L2210.9,1393.0L2235.6,1407.1L2229.3,1418.5L2215.2,1410.3L2212.2,1415.8L2226.3,1424.0L2220.0,1435.3L2194.1,1420.4L2209.1,1393.4L2098.4,1329.9L2083.3,1356.6L2054.2,1339.9L2084.4,1286.7L2056.7,1270.8L2071.8,1244.3L2045.3,1229.2L2015.7,1281.0L2043.4,1296.9L2027.6,1324.6L1972.2,1292.7L1956.9,1319.4L1929.3,1303.4L1899.2,1355.7L1926.9,1371.7L1910.8,1399.8L1883.1,1383.7L1868.2,1409.4L1923.8,1441.8L1908.3,1469.0L1936.2,1485.2L1891.1,1564.6L1879.3,1557.7L1918.0,1489.8L1890.1,1473.5L1905.6,1446.4L1850.0,1414.0L1877.9,1365.7L1905.6,1381.7L1908.8,1376.3L1881.1,1360.2L1911.9,1306.8L1878.7,1287.6L1863.3,1314.2L1813.9,1285.6L1829.3,1259.1L1801.9,1243.3L1832.8,1190.7L1805.5,1175.0L1848.4,1102.2L1897.3,1130.1ZM2312.3,1207.3L2257.9,1176.5L2243.8,1201.6L2298.3,1232.5ZM2115.0,1232.6L2170.5,1264.3L2185.4,1237.8L2213.2,1253.7L2242.0,1202.1L2214.3,1186.4L2229.0,1160.2L2202.5,1145.3L2158.2,1223.8L2129.3,1207.4L2144.2,1181.2L2090.2,1150.6L2075.9,1175.6L2103.5,1191.3L2073.6,1243.9L2100.1,1259.0ZM1975.0,1224.0L1945.2,1275.7L1971.7,1291.0L2001.4,1239.1ZM1977.8,1155.9L1948.2,1207.2L1974.5,1222.2L2004.1,1170.9ZM1850.7,1186.3L1819.9,1238.9L1846.2,1254.0L1861.6,1227.6L1890.2,1244.1L1874.8,1270.5L1928.8,1301.6L1943.4,1276.2L1915.9,1260.3L1931.1,1233.9L1876.3,1202.4L1891.6,1176.2L1864.2,1160.6L1879.5,1134.5L1853.4,1119.6L1823.4,1170.6ZM1858.2,1296.4L1873.0,1271.0L1846.7,1255.8L1831.9,1281.2ZM1934.1,1165.7L1907.9,1150.8L1893.3,1175.8L1919.6,1190.8ZM1866.6,1245.3L1863.5,1250.7L1869.1,1253.9L1872.2,1248.5ZM1946.1,1298.3L1951.8,1301.5L1954.9,1296.1L1949.2,1292.9ZM2142.0,1475.4L2126.8,1502.7L2098.6,1486.3L2095.5,1491.9L2129.5,1511.6L2144.6,1484.3L2181.3,1505.5L2174.9,1516.9L2150.1,1502.5L2135.6,1528.7L2160.4,1543.2L2154.1,1554.7L2139.9,1546.4L2124.6,1573.9L2045.7,1527.9L2061.0,1500.6L2055.3,1497.3L2024.6,1552.0L1974.0,1522.5L1989.5,1495.2L1983.8,1491.9L1949.6,1552.2L1955.4,1555.6L1970.9,1528.1L2027.2,1561.0L2042.5,1533.5L2093.2,1563.1L2065.7,1612.7L2037.4,1596.1L2014.5,1637.1L2002.6,1630.1L2031.3,1578.8L1976.2,1546.5L1961.3,1572.9L1989.5,1589.4L1975.5,1614.2L1963.7,1607.3L1971.2,1594.0L1965.4,1590.6L1957.9,1603.9L1946.1,1597.0L1959.5,1573.3L1931.3,1556.8L1978.5,1473.6L2007.7,1490.6L1992.3,1517.9L2019.2,1533.6L2049.9,1479.0L2078.0,1495.3L2092.6,1469.2L2064.5,1453.0L2110.6,1370.9L2139.8,1387.6L2124.7,1414.6L2152.8,1430.8L2137.7,1457.9L2190.7,1488.5L2184.3,1499.9ZM2119.2,1555.5L2133.7,1529.2L2078.5,1497.2L2063.9,1523.3ZM2094.4,1468.8L2121.4,1484.4L2135.9,1458.3L2109.0,1442.8ZM2075.0,1567.7L2047.9,1551.9L2033.2,1578.3L2060.2,1594.1ZM2131.6,1440.8L2134.7,1435.3L2106.6,1419.1L2121.7,1392.2L2116.0,1388.9L2082.7,1448.4L2088.4,1451.7L2103.6,1424.6ZM2040.0,1605.1L2090.9,1634.9L2071.2,1670.5L2059.3,1663.5L2072.5,1639.6L2045.4,1623.7L2032.1,1647.5L2020.2,1640.5ZM1574.9,1015.0L1606.1,964.0L1654.1,991.3L1638.6,1016.9L1665.4,1032.3L1649.9,1058.0L1682.3,1076.6L1697.8,1050.8L1751.8,1081.6L1754.9,1076.4L1700.9,1045.5L1716.4,1019.9L1710.9,1016.7L1695.5,1042.4L1647.2,1014.8L1662.7,989.3L1636.0,974.0L1663.7,928.4L1690.4,943.6L1708.9,913.1L1703.4,910.0L1688.1,935.3L1661.4,920.2L1630.5,970.9L1595.3,950.8L1601.8,940.2L1625.8,953.9L1656.1,904.3L1632.1,890.7L1638.5,880.2L1652.5,888.1L1683.1,837.9L1811.0,910.0L1768.5,980.9L1741.6,965.7L1738.5,970.9L1770.8,989.3L1786.1,963.8L1813.0,979.0L1816.1,973.8L1789.2,958.6L1816.4,913.1L1891.6,955.5L1876.5,980.9L1882.0,984.0L1900.2,953.4L1873.2,938.2L1915.1,867.7L1963.4,894.7L1933.6,945.3L1939.1,948.4L1968.9,897.8L2017.3,925.0L1927.6,1078.3L1933.2,1081.5L1978.2,1004.4L2005.4,1019.7L2008.4,1014.5L1981.3,999.2L2008.0,953.4L2035.1,968.6L2038.1,963.4L2011.1,948.2L2037.6,902.8L2118.9,948.2L2121.9,943.1L2067.6,912.8L2094.0,867.5L2121.0,882.6L2143.3,844.1L2154.6,850.3L2126.2,899.4L2099.2,884.4L2085.1,908.5L2139.4,938.8L2124.1,965.2L2042.8,919.7L2028.6,944.0L2055.7,959.2L2040.9,984.6L2068.1,999.9L2052.7,1026.6L2025.4,1011.2L2011.2,1035.8L2038.4,1051.2L1993.5,1128.8L2019.8,1143.7L2034.8,1117.7L2062.2,1133.2L2077.1,1107.3L2132.1,1138.4L2146.2,1113.5L2091.3,1082.5L2106.1,1056.7L2078.8,1041.3L2108.9,989.0L2136.2,1004.3L2150.8,978.8L2178.1,994.0L2206.6,944.2L2152.2,913.9L2180.6,864.7L2191.9,871.0L2169.7,909.7L2224.1,940.0L2183.5,1011.2L2156.1,995.9L2153.2,1001.1L2180.5,1016.4L2139.5,1088.3L2112.0,1072.9L2109.0,1078.1L2163.9,1109.1L2137.4,1155.8L2082.4,1124.7L2067.4,1150.7L2040.0,1135.1L2025.0,1161.2L1975.8,1133.1L2020.8,1055.5L2015.2,1052.4L1955.1,1156.0L1878.7,1112.5L1893.9,1086.6L1888.4,1083.4L1873.2,1109.3L1791.8,1062.9L1788.7,1068.1L1815.7,1083.6L1800.4,1109.5L1827.6,1125.0L1784.5,1198.0L1735.6,1169.9L1766.6,1117.8L1761.0,1114.6L1745.6,1140.6L1691.4,1109.5L1660.2,1161.5L1611.7,1133.5L1627.3,1107.5L1621.8,1104.4L1606.2,1130.3L1516.9,1078.8L1523.5,1068.0L1601.4,1112.9L1617.1,1087.0L1645.2,1103.2L1629.5,1129.1L1655.4,1144.0L1685.9,1093.2L1632.1,1062.3L1647.6,1036.6L1620.8,1021.2L1636.4,995.6L1610.8,981.0L1579.6,1032.2L1554.3,1017.7L1560.9,1007.0ZM2134.1,1071.0L2162.9,1020.7L2136.7,1006.0L2107.9,1056.3ZM2013.2,970.4L1998.9,994.9L2024.9,1009.5L2039.1,985.0ZM1949.9,1138.6L2009.4,1036.2L1983.4,1021.5L1938.3,1098.8L1911.0,1083.3L1896.5,1108.1ZM1883.3,1066.1L1910.5,1081.6L1999.8,929.2L1973.9,914.7L1944.1,965.4L1917.1,950.2L1887.0,1001.1L1858.9,985.2L1874.0,959.8L1821.3,930.0L1806.8,954.3L1833.7,969.5L1818.5,995.0L1845.5,1010.3L1829.7,1037.0L1802.7,1021.7L1788.0,1046.3L1868.2,1092.0ZM1920.1,884.5L1890.8,934.0L1916.6,948.5L1945.9,899.0ZM1779.6,1180.5L1809.7,1129.4L1783.7,1114.5L1753.5,1165.5ZM1798.0,1087.9L1772.0,1073.1L1757.3,1097.9L1783.2,1112.7ZM1791.0,980.8L1776.3,1005.3L1802.2,1020.0L1816.8,995.5ZM1759.2,1031.3L1774.6,1005.7L1720.8,975.2L1736.8,948.7L1763.6,963.9L1793.4,914.3L1687.8,854.6L1657.8,903.9L1683.3,918.4L1698.7,893.1L1726.5,908.8L1695.2,960.6L1668.4,945.4L1653.6,969.7L1680.4,985.0L1664.9,1010.5L1690.7,1025.2L1706.1,999.6L1734.1,1015.6L1718.7,1041.2L1771.5,1071.4L1786.2,1046.7ZM1755.5,1098.3L1702.6,1068.0L1687.7,1092.8L1740.7,1123.2ZM1782.5,1030.2L1785.6,1024.9L1780.1,1021.8L1777.0,1027.0ZM1824.7,1019.9L1827.8,1014.6L1822.3,1011.5L1819.2,1016.7ZM2047.5,1009.4L2050.5,1004.2L2044.9,1001.1L2041.9,1006.3ZM2096.4,1037.0L2102.0,1040.1L2119.8,1009.2L2114.2,1006.1ZM1791.5,1387.2L1841.2,1416.2L1809.9,1470.4L1815.6,1473.7L1831.2,1446.6L1881.2,1475.8L1865.6,1503.0L1893.6,1519.4L1873.6,1554.4L1861.9,1547.5L1875.3,1524.0L1847.4,1507.6L1863.0,1480.3L1836.3,1464.7L1820.6,1492.0L1792.8,1475.6L1779.3,1499.0L1767.7,1492.2L1775.2,1479.1L1769.6,1475.8L1762.0,1488.8L1750.4,1482.0L1763.9,1458.7L1737.4,1443.1L1723.8,1466.4L1712.2,1459.6L1732.4,1425.0L1760.1,1441.2ZM1823.0,1420.7L1796.5,1405.3L1765.7,1458.2L1792.3,1473.8ZM1794.7,1381.7L1822.7,1333.6L1872.3,1362.4L1844.4,1410.7ZM1812.8,1377.2L1839.3,1392.6L1854.2,1366.9L1827.7,1351.5ZM1982.3,754.7L1993.4,760.9L1980.0,783.5L2005.7,797.8L2019.0,775.1L2030.3,781.3L2022.4,794.6L2054.7,812.6L2062.5,799.3L2073.8,805.5L2059.9,829.3L2006.2,799.5L1992.1,823.3L2018.9,838.3L2004.2,863.3L2057.0,892.8L2099.6,819.8L2110.8,826.0L2062.1,909.7L2008.1,879.5L1993.4,904.7L1918.2,862.6L1944.9,817.7L1998.5,847.6L2001.5,842.5L1974.7,827.5L1989.4,802.6L1962.7,787.7ZM1935.6,858.4L1988.3,887.8L2002.4,863.7L1949.9,834.4ZM1641.4,1328.3L1685.6,1254.1L1740.2,1285.8L1771.4,1232.9L1820.6,1261.3L1777.1,1335.6L1749.6,1319.6L1730.7,1351.8L1758.3,1367.9L1730.0,1416.2L1674.9,1383.9L1671.6,1389.4L1699.2,1405.5L1678.9,1440.0L1667.3,1433.2L1681.0,1410.1L1653.4,1393.9L1669.3,1367.1L1643.0,1351.7L1613.4,1401.6L1601.9,1394.8L1638.2,1333.8L1665.6,1349.8L1668.8,1344.3ZM1802.6,1265.7L1776.4,1250.6L1745.8,1302.5L1772.1,1317.7ZM1740.1,1372.4L1712.6,1356.3L1744.0,1302.9L1690.4,1271.8L1659.6,1323.9L1687.0,1339.8L1671.1,1366.6L1725.0,1398.1ZM1867.7,935.1L1672.3,824.9L1678.7,814.5L1862.8,918.2L1965.6,745.5L1976.8,751.7ZM1693.8,1117.9L1742.4,1145.9L1714.5,1192.8L1665.7,1164.7ZM1698.6,1135.3L1683.6,1160.3L1709.6,1175.3L1724.5,1150.3ZM1711.3,1198.2L1596.3,1391.5L1584.9,1384.8L1693.4,1202.6L1507.0,1094.9L1513.7,1084.1ZM2388.7,1031.6L2334.2,1129.6L2229.3,1070.8L2284.3,973.5ZM2371.2,1035.9L2289.8,990.6L2247.0,1066.4L2328.6,1112.2ZM1964.4,1408.5L1991.9,1360.2L2041.9,1389.1L2014.5,1437.5ZM1982.5,1403.9L2009.2,1419.4L2023.8,1393.6L1997.2,1378.2ZM1900.9,760.1L1844.2,854.6L1743.2,797.9L1800.2,704.1ZM1883.5,764.2L1805.1,720.5L1760.6,793.7L1839.3,837.8ZM1625.6,1219.3L1565.3,1319.8L1462.2,1259.5L1522.9,1159.7ZM1607.6,1223.7L1527.5,1177.2L1480.3,1255.0L1560.6,1302.0ZM1606.7,1132.3L1622.4,1106.3L1625.3,1108.0L1609.7,1134.0L1660.7,1163.5L1691.9,1111.4L1746.1,1142.5L1761.6,1116.5L1764.6,1118.2L1733.6,1170.3L1785.1,1200.0L1829.5,1124.5L1802.4,1109.0L1817.7,1083.1L1790.6,1067.7L1792.3,1064.8L1873.7,1111.2L1888.9,1085.3L1891.9,1087.1L1876.7,1113.0L1955.6,1158.0L2015.8,1054.3L2018.8,1056.0L1973.8,1133.6L2025.6,1163.1L2040.6,1137.0L2068.0,1152.6L2082.9,1126.6L2138.0,1157.8L2165.9,1108.6L2111.0,1077.7L2112.6,1074.8L2140.0,1090.3L2182.5,1015.9L2155.1,1000.6L2156.7,997.8L2184.1,1013.1L2226.0,939.5L2171.6,909.2L2193.2,871.7L2204.5,878.0L2189.1,904.9L2223.7,924.2L2239.1,897.2L2250.5,903.5L2143.1,1092.0L2346.3,1206.6L2340.2,1217.6L2339.2,1217.0L2335.3,1224.2L2336.3,1224.8L2330.2,1235.8L2317.5,1228.7L2332.0,1202.4L2251.8,1157.1L2237.1,1183.2L2234.0,1181.5L2248.7,1155.4L2196.5,1125.9L2152.2,1204.3L2149.1,1202.5L2164.0,1176.3L2084.3,1131.2L2056.1,1180.5L2083.7,1196.2L2067.0,1225.4L2039.4,1209.6L1995.8,1285.9L2023.5,1301.8L2021.8,1304.8L1991.0,1287.1L2021.3,1234.2L1993.7,1218.4L2023.9,1166.0L1972.1,1136.5L1928.3,1212.1L1955.8,1227.8L1938.9,1257.1L1935.8,1255.4L1951.0,1229.0L1896.1,1197.5L1897.8,1194.6L1925.3,1210.3L1954.0,1160.9L1902.3,1131.4L1887.1,1157.4L1884.1,1155.7L1899.3,1129.7L1847.9,1100.3L1803.5,1175.5L1830.8,1191.2L1799.9,1243.8L1827.3,1259.6L1811.9,1286.1L1863.9,1316.2L1879.3,1289.6L1909.9,1307.3L1879.1,1360.7L1906.8,1376.8L1905.1,1379.7L1877.4,1363.7L1848.0,1414.5L1903.6,1446.9L1888.1,1474.0L1916.0,1490.3L1878.0,1557.0L1874.9,1555.1L1895.6,1518.9L1867.6,1502.5L1883.3,1475.2L1830.7,1444.5L1815.0,1471.7L1811.9,1469.9L1843.2,1415.7L1790.9,1385.2L1759.5,1439.2L1731.8,1423.0L1710.9,1458.8L1699.3,1452.0L1715.4,1424.5L1707.9,1420.1L1691.8,1447.6L1680.2,1440.8L1701.2,1405.0L1673.6,1388.9L1675.4,1385.9L1730.5,1418.2L1760.3,1367.4L1732.7,1351.3L1750.2,1321.6L1777.7,1337.6L1822.6,1260.8L1770.9,1230.9L1739.7,1283.8L1685.0,1252.1L1639.4,1328.8L1666.8,1344.8L1665.1,1347.8L1637.7,1331.8L1600.7,1394.1L1597.6,1392.3L1713.3,1197.7L1514.4,1082.9L1516.2,1080.0ZM1792.7,1382.2L1844.9,1412.7L1874.3,1361.9L1822.1,1331.6ZM1693.2,1116.0L1663.7,1165.2L1715.0,1194.8L1744.4,1145.4ZM1765.9,1213.3L1793.2,1229.1L1812.9,1195.6L1805.5,1191.3L1790.0,1217.6L1735.5,1186.1L1731.2,1193.3L1719.9,1212.4L1700.0,1245.9L1734.8,1266.1ZM1785.9,1367.2L1817.1,1313.8L1872.3,1345.7L1891.9,1311.7L1884.4,1307.4L1868.9,1334.1L1813.8,1302.1L1782.7,1355.5L1755.1,1339.5L1750.8,1346.8L1778.4,1362.8L1747.0,1416.7L1754.5,1421.1L1774.5,1386.8ZM1881.2,1458.8L1885.4,1451.4L1850.0,1430.8L1845.8,1438.2ZM1890.1,1490.5L1885.9,1497.9L1893.5,1502.4L1897.8,1494.9ZM2038.3,1184.9L2053.3,1158.8L2045.8,1154.5L2041.7,1161.6L2030.8,1180.6L2011.6,1214.0L2019.1,1218.3L2034.2,1192.0L2061.8,1207.8L2065.8,1200.6ZM1820.2,1104.6L1827.6,1108.9L1831.8,1101.8L1824.4,1097.6ZM2180.4,1127.4L2172.9,1123.2L2154.1,1156.3L2161.6,1160.5ZM1773.2,1479.6L1766.4,1491.4L1763.3,1489.6L1770.1,1477.8ZM1969.1,1594.5L1962.4,1606.5L1959.2,1604.7L1966.0,1592.7ZM1984.4,1493.9L1987.5,1495.7L1972.0,1523.1L2025.1,1554.1L2055.9,1499.3L2059.0,1501.1L2043.7,1528.5L2125.2,1576.0L2140.5,1548.5L2153.4,1556.0L2147.0,1567.5L2146.0,1566.9L2130.7,1594.5L2102.4,1578.0L2082.9,1613.1L2111.3,1629.7L2084.5,1678.2L2072.5,1671.2L2092.9,1634.4L2039.4,1603.1L2018.9,1639.7L2015.8,1637.9L2038.0,1598.2L2066.3,1614.7L2095.3,1562.6L2041.9,1531.5L2026.6,1559.0L1970.3,1526.1L1954.8,1553.5L1951.7,1551.7ZM2099.2,1488.4L2127.4,1504.7L2142.6,1477.4L2183.6,1501.2L2182.0,1504.2L2144.0,1482.2L2128.9,1509.5L2097.6,1491.4ZM2116.6,1390.9L2119.7,1392.7L2104.6,1419.6L2132.7,1435.8L2131.0,1438.8L2103.0,1422.6L2087.8,1449.7L2084.7,1447.9ZM2215.8,1412.3L2228.6,1419.7L2227.0,1422.7L2214.2,1415.3ZM2077.3,1336.7L2074.3,1334.9L2104.4,1281.7L2076.6,1265.8L2078.3,1262.9L2106.0,1278.8L2121.0,1252.3L2176.6,1284.0L2191.4,1257.5L2219.3,1273.4L2248.8,1220.5L2279.7,1238.1L2265.0,1264.5L2302.6,1285.8L2301.0,1288.8L2263.4,1267.4L2248.6,1293.9L2220.7,1278.1L2205.9,1304.6L2178.0,1288.7L2149.8,1339.0L2205.8,1371.1L2204.1,1374.1L2092.4,1310.0ZM2126.4,1270.0L2122.3,1277.2L2111.4,1296.6L2107.3,1303.8L2142.7,1324.1L2161.7,1290.2ZM2257.8,1249.7L2261.9,1242.5L2254.3,1238.2L2235.5,1271.8L2243.1,1276.2L2247.1,1268.9ZM2192.8,1282.5L2200.4,1286.8L2204.5,1279.6L2196.9,1275.2ZM1948.1,1297.8L1949.8,1294.8L1952.9,1296.6L1951.2,1299.5ZM1870.2,1249.0L1868.5,1251.9L1865.5,1250.2L1867.2,1247.3ZM2258.7,1334.8L2260.4,1331.8L2273.2,1339.1L2271.5,1342.1ZM2098.4,1036.5L2114.8,1008.0L2117.8,1009.7L2101.4,1038.2ZM1697.3,1048.9L1681.8,1074.6L1651.9,1057.5L1667.4,1031.8L1640.5,1016.4L1656.1,990.9L1605.6,962.1L1574.4,1013.1L1561.6,1005.8L1568.2,995.1L1569.7,995.9L1589.6,963.5L1588.0,962.6L1594.6,952.0L1631.0,972.8L1661.9,922.0L1688.6,937.2L1704.0,911.9L1706.9,913.6L1689.9,941.7L1663.2,926.5L1634.0,974.5L1660.7,989.7L1645.2,1015.3L1696.0,1044.3L1711.4,1018.6L1714.4,1020.3L1699.0,1046.0L1752.9,1076.9L1751.2,1079.7ZM1673.9,1046.1L1669.6,1053.2L1677.0,1057.4L1681.2,1050.3ZM1868.3,937.0L1978.1,752.4L1981.0,754.0L1960.7,788.2L1987.5,803.1L1972.7,828.0L1999.6,842.9L1997.9,845.7L1944.3,815.8L1916.2,863.1L1993.9,906.6L2008.7,881.4L2062.7,911.5L2112.1,826.7L2123.4,833.0L2107.8,859.8L2115.2,863.9L2130.8,837.1L2142.1,843.4L2120.4,880.7L2093.4,865.7L2065.7,913.2L2119.9,943.5L2118.3,946.3L2037.0,900.9L2009.1,948.7L2036.2,963.9L2034.6,966.7L2007.5,951.5L1979.3,999.6L2006.5,1014.9L2004.8,1017.8L1977.7,1002.5L1932.6,1079.5L1929.6,1077.8L2019.3,924.5L1968.3,895.9L1938.5,946.5L1935.5,944.8L1965.3,894.3L1914.6,865.8L1871.3,938.7L1898.2,953.9L1881.5,982.1L1878.5,980.5L1893.6,955.0L1815.9,911.2L1787.2,959.1L1814.1,974.3L1812.4,977.1L1785.5,961.9L1770.3,987.4L1740.5,970.4L1742.2,967.6L1769.0,982.8L1812.9,909.5L1682.6,836.0L1651.9,886.2L1639.3,879.0L1645.7,868.5L1647.3,869.3L1666.8,837.5L1665.2,836.6L1671.6,826.1ZM1966.0,814.0L1970.1,807.2L1962.8,803.2L1958.7,810.0ZM2021.2,902.4L2013.8,898.2L2009.8,905.1L2017.1,909.2ZM2024.4,794.2L2031.5,782.0L2042.7,788.3L2041.7,790.0L2049.0,794.1L2050.0,792.3L2061.3,798.6L2054.2,810.7ZM2046.9,1007.5L2043.9,1005.8L2045.5,1003.0L2048.5,1004.7ZM1824.2,1018.0L1821.2,1016.3L1822.9,1013.4L1825.9,1015.1ZM1778.9,1026.5L1780.6,1023.7L1783.6,1025.4L1781.9,1028.2ZM2336.3,1136.2L2222.7,1072.4L2282.3,967.1L2395.3,1029.9ZM2390.7,1031.1L2283.7,971.6L2227.4,1071.2L2334.8,1131.6ZM2016.5,1444.4L1957.6,1410.2L1989.9,1353.5L2048.7,1387.4ZM1962.4,1409.0L2015.1,1439.6L2043.9,1388.6L1991.3,1358.2ZM1455.4,1261.1L1521.2,1153.2L1632.3,1217.6L1567.1,1326.5ZM1627.6,1218.8L1522.4,1157.8L1460.2,1260.0L1565.8,1321.8ZM1736.6,799.4L1798.4,697.9L1907.4,758.5L1846.1,860.9ZM1902.8,759.6L1799.7,702.2L1741.2,798.3L1844.8,856.4Z" fill="#d89a28" fill-rule="evenodd"/><path d="M1862.2,1230.0L1887.8,1244.7L1873.5,1269.3L1847.9,1254.5ZM1865.9,1242.9L1861.1,1251.3L1869.8,1256.3L1874.6,1247.9ZM2111.4,1373.3L2137.4,1388.3L2122.3,1415.2L2150.4,1431.4L2136.3,1456.6L2108.2,1440.4L2093.1,1467.5L2066.9,1452.4ZM2132.3,1443.3L2137.1,1434.7L2109.1,1418.5L2124.2,1391.6L2115.3,1386.5L2080.2,1449.0L2089.1,1454.2L2104.3,1427.1ZM1930.5,1302.2L1944.8,1277.4L1970.5,1292.2L1956.2,1317.0ZM1943.7,1298.9L1952.4,1303.9L1957.3,1295.5L1948.5,1290.5ZM2341.7,1153.2L2205.5,1076.6L2277.0,950.4L2412.5,1025.7ZM2337.7,1140.4L2399.6,1028.9L2281.0,962.9L2218.4,1073.5ZM2021.7,1462.1L1939.9,1414.6L1984.8,1335.9L2066.4,1382.9ZM2017.8,1448.8L2053.1,1386.3L1988.7,1349.1L1953.2,1411.3ZM1786.7,1045.1L1761.6,1030.8L1775.9,1006.9L1800.9,1021.2ZM1783.1,1032.4L1788.0,1024.3L1779.4,1019.5L1774.6,1027.6ZM1829.0,1034.8L1803.9,1020.5L1818.1,996.7L1843.2,1010.9ZM1825.4,1022.2L1830.2,1014.1L1821.7,1009.2L1816.9,1017.3ZM2052.0,1024.3L2026.7,1010.0L2040.5,986.3L2065.8,1000.5ZM2048.2,1011.7L2052.8,1003.6L2044.3,998.8L2039.6,1006.9ZM2081.1,1040.7L2109.6,991.3L2135.0,1005.5L2106.6,1055.0ZM2094.1,1037.6L2102.7,1042.4L2122.1,1008.7L2113.5,1003.8ZM1719.5,803.5L1793.8,681.8L1924.4,754.4L1850.9,877.3ZM1732.3,800.4L1847.3,865.0L1911.6,757.5L1797.3,693.9ZM1437.7,1265.5L1516.7,1136.1L1649.9,1213.3L1571.7,1344.0ZM1451.0,1262.2L1568.2,1330.9L1636.7,1216.5L1520.0,1148.9ZM2147.4,1090.9L2253.3,905.1L2261.7,909.7L2160.4,1087.7L2352.3,1195.9L2347.8,1203.9ZM1879.7,1156.8L1888.3,1161.7L1903.5,1135.6L1949.6,1161.9L1924.0,1206.0L1896.6,1190.3L1891.8,1198.6L1946.7,1230.1L1931.4,1256.5L1940.1,1261.5L1960.2,1226.8L1932.7,1211.0L1973.4,1140.8L2019.6,1167.1L1989.4,1219.5L2016.9,1235.3L1986.6,1288.2L2023.1,1309.1L2027.8,1300.7L2000.1,1284.8L2040.7,1213.9L2068.3,1229.7L2088.0,1195.1L2060.5,1179.4L2085.6,1135.5L2159.6,1177.4L2144.8,1203.6L2153.5,1208.6L2197.8,1130.2L2244.4,1156.4L2229.7,1182.6L2238.5,1187.5L2253.1,1161.4L2327.7,1203.4L2313.1,1229.7L2328.7,1238.5L2324.2,1246.7L2300.1,1233.0L2314.7,1206.7L2257.1,1174.2L2242.5,1200.4L2216.7,1185.8L2231.4,1159.6L2201.8,1142.9L2157.5,1221.5L2131.7,1206.8L2146.6,1180.6L2089.5,1148.3L2073.5,1176.2L2101.1,1191.9L2072.2,1242.6L2044.6,1226.9L2013.3,1281.6L2041.0,1297.5L2026.9,1322.2L1973.4,1291.5L2003.8,1238.5L1976.3,1222.8L2006.5,1170.3L1977.1,1153.6L1945.8,1207.8L1973.3,1223.5L1943.9,1274.5L1918.3,1259.7L1933.5,1233.3L1878.6,1201.8L1892.9,1177.5L1920.3,1193.1L1936.5,1165.1L1907.3,1148.4L1892.0,1174.5L1866.6,1160.0L1881.9,1133.9L1852.7,1117.3L1821.0,1171.2L1848.3,1186.9L1817.5,1239.5L1844.9,1255.3L1829.5,1281.7L1858.9,1298.8L1874.3,1272.2L1927.5,1302.9L1896.8,1356.3L1924.5,1372.3L1910.1,1397.4L1882.4,1381.2L1865.8,1410.1L1921.4,1442.4L1905.9,1469.6L1933.8,1485.9L1889.5,1563.7L1880.9,1558.7L1920.4,1489.2L1892.5,1472.9L1908.1,1445.8L1852.5,1413.4L1878.6,1368.1L1906.3,1384.1L1911.2,1375.7L1883.5,1359.6L1914.3,1306.2L1878.0,1285.2L1862.6,1311.8L1816.3,1285.0L1831.7,1258.5L1804.3,1242.7L1835.2,1190.1L1807.9,1174.4L1849.1,1104.6L1894.9,1130.7ZM2269.4,1263.4L2284.0,1237.0L2247.4,1216.2L2217.9,1269.0L2190.1,1253.2L2175.2,1279.7L2119.7,1248.0L2104.7,1274.4L2077.0,1258.6L2072.2,1266.9L2100.0,1282.8L2069.9,1336.0L2078.6,1341.1L2093.7,1314.4L2205.5,1378.5L2210.2,1370.0L2154.2,1337.9L2179.3,1293.1L2207.2,1309.0L2222.1,1282.4L2250.0,1298.3L2264.7,1271.8L2299.5,1291.5L2294.9,1299.7L2268.8,1284.8L2254.0,1311.4L2226.1,1295.4L2211.3,1322.1L2183.3,1306.1L2167.4,1334.6L2223.4,1366.7L2209.5,1391.7L2097.6,1327.5L2082.6,1354.2L2056.6,1339.3L2086.8,1286.1L2059.1,1270.2L2073.1,1245.6L2100.8,1261.4L2115.8,1235.0L2171.3,1266.6L2186.1,1240.2L2213.9,1256.0L2243.4,1203.3L2297.1,1233.7L2282.5,1260.1L2308.6,1275.0L2304.1,1283.1ZM2259.0,1327.4L2254.4,1335.9L2270.0,1344.8L2265.5,1353.0L2241.2,1339.2L2255.0,1314.3L2279.2,1328.2L2274.7,1336.4ZM2214.5,1407.9L2209.7,1416.4L2225.5,1425.5L2220.9,1433.8L2196.5,1419.8L2210.4,1394.7L2234.7,1408.7L2230.2,1416.9ZM2141.2,1473.0L2126.1,1500.2L2097.9,1483.9L2093.1,1492.5L2130.2,1514.0L2145.4,1486.7L2180.4,1507.0L2175.8,1515.4L2149.4,1500.1L2134.2,1527.5L2079.8,1495.9L2094.0,1470.5L2122.1,1486.8L2137.2,1459.6L2189.8,1490.0L2185.2,1498.4ZM2139.1,1544.0L2123.9,1571.5L2048.1,1527.3L2063.4,1500.0L2054.5,1494.8L2023.8,1549.6L1976.5,1521.9L1991.9,1494.6L1983.1,1489.4L1947.2,1552.8L1956.1,1558.0L1971.6,1530.6L2027.9,1563.5L2043.3,1536.0L2090.8,1563.7L2064.9,1610.2L2036.6,1593.6L2012.9,1636.2L2004.2,1631.1L2032.7,1580.1L2061.0,1596.6L2077.4,1567.1L2047.2,1549.5L2031.8,1577.0L1975.5,1544.1L1959.9,1571.6L1933.8,1556.2L1979.2,1476.1L2005.3,1491.2L1989.8,1518.6L2019.9,1536.1L2050.6,1481.4L2076.8,1496.6L2061.5,1524.0L2119.9,1558.0L2135.1,1530.5L2159.6,1544.7L2154.9,1553.2ZM1973.6,1593.4L1964.7,1588.2L1956.4,1603.0L1947.7,1597.9L1960.8,1574.6L1987.0,1590.0L1973.9,1613.3L1965.3,1608.2ZM2040.7,1607.6L2088.4,1635.5L2069.6,1669.5L2060.9,1664.4L2075.0,1639.0L2044.6,1621.2L2030.5,1646.5L2021.8,1641.4ZM1575.5,1017.3L1606.7,966.2L1651.7,991.9L1636.2,1017.5L1663.0,1032.8L1647.5,1058.5L1682.9,1078.9L1698.4,1053.1L1752.4,1084.0L1757.3,1075.8L1703.3,1045.0L1718.7,1019.3L1710.3,1014.5L1694.8,1040.1L1649.6,1014.2L1665.1,988.7L1638.3,973.4L1664.3,930.7L1691.0,945.8L1711.2,912.5L1702.8,907.8L1687.5,933.0L1660.8,917.9L1629.9,968.6L1596.1,949.4L1600.9,941.6L1626.4,956.1L1657.3,905.5L1684.0,920.6L1699.3,895.4L1724.1,909.4L1694.5,958.3L1667.8,943.1L1651.3,970.3L1678.0,985.5L1662.6,1011.1L1691.3,1027.5L1706.7,1001.9L1731.7,1016.1L1716.3,1041.8L1770.3,1072.6L1756.0,1096.7L1702.0,1065.7L1686.4,1091.6L1634.5,1061.7L1650.0,1036.0L1623.2,1020.6L1638.7,995.1L1610.1,978.7L1578.9,1029.9L1555.2,1016.2L1560.0,1008.4ZM1653.1,890.3L1683.8,840.1L1808.6,910.6L1767.8,978.7L1741.0,963.4L1736.1,971.5L1771.5,991.5L1786.7,966.1L1813.6,981.3L1818.4,973.3L1791.5,958.0L1817.1,915.3L1889.2,956.1L1874.2,981.5L1882.7,986.3L1902.5,952.8L1875.6,937.7L1915.8,869.9L1961.1,895.3L1931.2,945.9L1939.7,950.7L1969.6,900.1L2015.0,925.5L1925.3,1078.9L1933.9,1083.8L1978.9,1006.7L2006.1,1022.0L2010.8,1013.9L1983.6,998.6L2008.7,955.7L2035.8,970.9L2040.5,962.9L2013.4,947.7L2038.3,905.0L2119.6,950.5L2124.2,942.5L2070.0,912.2L2094.7,869.8L2121.7,884.8L2144.8,844.9L2153.1,849.5L2125.5,897.2L2098.5,882.1L2082.8,909.1L2137.0,939.4L2123.4,963.0L2042.1,917.4L2026.3,944.5L2053.4,959.7L2039.6,983.4L2012.5,968.2L1996.6,995.4L2023.7,1010.7L2009.9,1034.6L1982.7,1019.2L1937.6,1096.5L1912.3,1082.1L2002.1,928.7L1973.3,912.5L1943.4,963.1L1918.3,949.0L1948.2,898.4L1919.5,882.3L1888.5,934.5L1915.4,949.7L1886.4,998.9L1861.2,984.6L1876.3,959.2L1820.7,927.8L1804.5,954.9L1831.4,970.1L1817.2,993.8L1790.3,978.6L1775.0,1004.1L1723.2,974.6L1737.4,950.9L1764.3,966.2L1795.8,913.7L1687.2,852.4L1656.5,902.7L1632.9,889.3L1637.7,881.6ZM2167.3,910.2L2221.8,940.5L2182.8,1008.9L2155.4,993.6L2150.8,1001.6L2178.2,1017.0L2138.7,1086.0L2111.3,1070.6L2106.7,1078.7L2161.6,1109.7L2136.7,1153.5L2081.7,1122.3L2066.7,1148.4L2039.3,1132.8L2024.3,1158.8L1978.1,1132.6L2023.1,1054.9L2014.5,1050.1L1954.4,1153.7L1881.1,1111.9L1896.3,1086.0L1887.7,1081.1L1872.5,1107.0L1791.1,1060.6L1786.3,1068.7L1813.4,1084.2L1798.0,1110.1L1825.2,1125.6L1783.9,1195.7L1738.0,1169.3L1768.9,1117.2L1760.4,1112.3L1744.9,1138.3L1690.8,1107.2L1659.6,1159.2L1614.0,1132.9L1629.7,1106.9L1621.2,1102.0L1605.5,1128.0L1517.8,1077.4L1522.6,1069.4L1602.1,1115.2L1617.7,1089.3L1642.8,1103.7L1627.2,1129.7L1656.1,1146.4L1687.2,1094.4L1741.3,1125.5L1756.8,1099.5L1782.0,1114.0L1751.1,1166.1L1780.2,1182.8L1812.1,1128.8L1785.0,1113.3L1800.3,1087.4L1773.3,1071.9L1787.5,1047.9L1868.8,1094.3L1884.0,1068.4L1909.3,1082.8L1894.1,1108.7L1950.6,1140.9L2010.7,1037.4L2036.1,1051.8L1991.2,1129.4L2020.5,1146.0L2035.5,1120.0L2062.9,1135.6L2077.8,1109.6L2132.8,1140.7L2148.6,1112.9L2093.7,1081.9L2107.5,1057.9L2134.8,1073.3L2165.2,1020.1L2137.9,1004.8L2151.6,981.1L2178.8,996.3L2208.9,943.6L2154.5,913.3L2182.1,865.5L2190.4,870.2ZM1792.2,1389.6L1838.8,1416.8L1807.5,1471.0L1816.2,1476.1L1831.9,1449.0L1878.8,1476.4L1863.2,1503.6L1891.1,1520.0L1872.0,1553.5L1863.4,1548.4L1877.7,1523.4L1849.8,1507.0L1865.4,1479.7L1835.7,1462.3L1820.0,1489.5L1794.1,1474.4L1825.5,1420.1L1795.8,1402.9L1764.4,1456.9L1736.7,1440.7L1722.2,1465.5L1713.7,1460.5L1733.1,1427.4L1760.7,1443.6ZM1777.7,1478.5L1768.9,1473.3L1760.4,1487.9L1751.9,1482.9L1765.2,1460.0L1791.1,1475.1L1777.8,1498.1L1769.2,1493.1ZM1797.1,1381.1L1823.4,1336.0L1869.9,1363.0L1843.7,1408.3ZM1810.4,1377.8L1840.0,1395.0L1856.6,1366.3L1827.1,1349.1ZM1983.7,755.5L1991.9,760.1L1977.7,784.1L2004.5,799.0L1989.8,823.9L2016.6,838.8L2002.9,862.1L1949.2,832.2L1933.3,858.9L1988.9,890.1L2003.7,864.9L2057.6,895.0L2101.1,820.6L2109.3,825.2L2061.4,907.4L2007.5,877.3L1992.7,902.4L1920.5,862.0L1945.5,819.9L1999.2,849.8L2003.8,841.9L1977.0,827.0L1991.7,802.0L1965.0,787.2ZM2020.1,795.2L2055.4,814.8L2064.0,800.1L2072.3,804.7L2059.2,827.1L2007.4,798.3L2020.5,776.0L2028.8,780.5ZM1643.9,1327.7L1686.2,1256.4L1740.9,1288.2L1772.1,1235.2L1818.2,1261.9L1776.4,1333.2L1749.0,1317.3L1728.3,1352.4L1755.8,1368.5L1729.3,1413.8L1674.2,1381.5L1669.2,1390.0L1696.7,1406.1L1677.4,1439.1L1668.9,1434.1L1683.4,1409.5L1655.9,1393.3L1670.6,1368.3L1725.7,1400.5L1742.5,1371.8L1715.0,1355.7L1745.3,1304.2L1772.8,1320.1L1805.0,1265.1L1775.7,1248.2L1744.5,1301.2L1689.8,1269.4L1657.1,1324.5L1684.5,1340.4L1669.8,1365.4L1642.4,1349.3L1611.9,1400.7L1603.5,1395.7L1638.9,1336.2L1666.3,1352.2L1671.3,1343.7ZM1867.1,932.9L1673.2,823.6L1677.9,815.9L1863.5,920.4L1967.1,746.3L1975.3,750.9ZM1694.4,1120.3L1740.0,1146.5L1713.8,1190.5L1668.1,1164.1ZM1697.9,1133.0L1681.3,1160.9L1710.3,1177.6L1726.9,1149.7ZM1708.9,1198.8L1594.8,1390.6L1586.4,1385.7L1695.8,1202.0L1507.9,1093.5L1512.8,1085.5ZM2386.4,1032.1L2333.5,1127.3L2231.7,1070.2L2285.1,975.7ZM2373.5,1035.3L2289.1,988.3L2244.6,1067.0L2329.4,1114.5ZM1966.8,1407.9L1992.6,1362.6L2039.5,1389.7L2013.8,1435.1ZM1980.1,1404.6L2009.9,1421.8L2026.3,1393.0L1996.5,1375.8ZM1898.6,760.6L1843.6,852.3L1745.5,797.3L1800.9,706.3ZM1885.8,763.7L1804.4,718.3L1758.3,794.2L1840.0,840.0ZM1623.2,1219.9L1564.7,1317.4L1464.6,1258.9L1523.5,1162.1ZM1610.0,1223.1L1526.9,1174.9L1477.9,1255.6L1561.2,1304.4ZM1604.9,959.8L1573.8,1010.8L1562.5,1004.3L1567.3,996.5L1570.4,998.2L1592.0,962.9L1588.9,961.2L1593.7,953.4ZM1715.7,1197.1L1731.3,1171.0L1785.7,1202.3L1801.2,1176.1L1828.4,1191.8L1797.6,1244.4L1770.2,1228.6L1739.0,1281.4L1684.4,1249.8L1715.7,1197.1ZM1766.6,1215.6L1793.9,1231.4L1815.3,1195.0L1804.8,1189.0L1789.4,1215.2L1734.8,1183.8L1728.9,1193.9L1719.3,1210.0L1697.6,1246.5L1735.4,1268.4ZM1709.4,1457.9L1700.9,1452.9L1717.8,1423.9L1707.2,1417.7L1690.2,1446.7L1681.7,1441.7L1703.6,1404.5L1731.2,1420.6ZM1762.7,1366.8L1735.2,1350.7L1750.8,1324.0L1778.3,1340.0L1809.5,1286.7L1864.5,1318.6L1880.0,1292.0L1907.5,1307.9L1876.7,1361.3L1821.5,1329.2L1790.3,1382.8L1790.2,1382.8L1758.8,1436.8L1731.2,1420.6ZM1786.6,1369.6L1817.8,1316.1L1872.9,1348.1L1894.3,1311.2L1883.7,1305.0L1868.3,1331.7L1813.2,1299.8L1782.0,1353.1L1754.5,1337.1L1748.4,1347.4L1776.0,1363.4L1744.5,1417.3L1755.2,1423.5L1776.9,1386.2ZM1885.7,1474.6L1830.0,1442.1L1845.6,1415.1L1901.2,1447.5ZM1881.9,1461.3L1887.9,1450.8L1849.4,1428.4L1843.4,1438.8ZM1885.7,1474.7L1913.6,1491.0L1898.0,1518.2L1870.1,1501.9ZM1889.5,1488.0L1883.5,1498.5L1894.2,1504.8L1900.2,1494.3ZM2067.0,1617.2L2097.7,1562.0L2126.0,1578.5L2141.2,1550.9L2152.5,1557.5L2147.9,1566.0L2145.2,1564.4L2130.0,1592.0L2101.7,1575.5L2080.4,1613.8L2108.8,1630.4L2082.9,1677.3L2074.1,1672.2L2095.4,1633.8ZM2106.7,1281.1L2106.7,1281.1L2121.7,1254.7L2177.3,1286.4L2147.4,1339.6L2091.7,1307.7ZM2125.6,1267.7L2119.9,1277.8L2110.7,1294.2L2104.9,1304.4L2143.5,1326.5L2164.1,1289.6ZM2023.7,1233.6L1996.1,1217.8L2026.3,1165.4L2026.3,1165.4L2041.3,1139.4L2068.7,1155.0L2053.7,1181.1L2081.3,1196.8L2066.3,1223.0L2038.7,1207.3ZM2040.7,1184.3L2055.7,1158.2L2045.1,1152.2L2039.3,1162.2L2030.1,1178.3L2009.2,1214.6L2019.8,1220.7L2034.9,1194.4L2062.5,1210.1L2068.2,1200.0ZM1804.8,1108.4L1820.1,1082.6L1847.2,1098.0L1831.9,1123.9ZM1817.8,1105.2L1828.3,1111.2L1834.1,1101.2L1823.7,1095.3ZM1669.7,1031.2L1696.6,1046.6L1681.1,1072.3L1654.2,1056.9ZM1673.2,1043.8L1667.3,1053.7L1677.6,1059.7L1683.6,1049.8ZM1682.0,833.8L1651.3,883.9L1640.1,877.6L1644.8,869.9L1647.9,871.6L1669.1,836.9L1666.1,835.2L1670.8,827.5ZM1970.4,828.5L1943.7,813.6L1958.4,788.7L1985.2,803.6ZM1966.7,816.3L1972.4,806.7L1962.1,801.0L1956.4,810.5ZM2036.3,898.7L2021.6,923.9L1994.6,908.8L2009.4,883.6ZM2023.5,901.8L2013.1,896.0L2007.5,905.7L2017.8,911.5ZM2053.5,808.5L2026.7,793.6L2033.0,782.9L2041.2,787.4L2039.4,790.6L2049.7,796.3L2051.5,793.2L2059.8,797.7ZM2119.7,878.5L2092.7,863.4L2113.6,827.6L2121.9,832.2L2105.5,860.3L2115.9,866.1L2132.3,837.9L2140.6,842.5ZM2195.8,1123.6L2166.3,1175.7L2138.7,1160.1L2168.2,1108.1ZM2182.8,1126.8L2172.2,1120.8L2151.7,1156.9L2162.4,1162.9ZM2194.7,872.5L2203.0,877.2L2186.8,905.5L2224.4,926.5L2240.6,898.0L2249.0,902.7L2228.3,938.9L2173.9,908.6ZM2319.8,1228.1L2334.4,1201.8L2345.5,1208.1L2341.1,1216.2L2338.5,1214.7L2332.9,1224.8L2335.5,1226.3L2331.0,1234.4ZM2249.5,1222.9L2277.3,1238.7L2262.6,1265.1L2262.6,1265.1L2247.9,1291.6L2220.0,1275.7ZM2258.6,1252.1L2264.2,1241.9L2253.5,1235.8L2233.1,1272.4L2243.9,1278.5L2249.5,1268.3ZM2177.3,1286.3L2192.2,1259.9L2220.0,1275.7L2205.2,1302.2ZM2190.4,1283.1L2201.2,1289.2L2206.9,1279.0L2196.1,1272.9Z" fill="#fff843" fill-rule="evenodd"/></g>
</svg>

<div class="a" style="left:0;top:0;width:2840px;height:41px;background:linear-gradient(#e9e9e9,#d1d1d1);border-bottom:1px solid #a9a9a9"></div>
<div class="a" style="left:14px;top:8px;width:22px;height:22px;border-radius:50%;background:linear-gradient(#d9d9d9,#cfcfcf);border:1px solid #b9b9b9"></div>
<div class="a" style="left:54px;top:8px;width:22px;height:22px;border-radius:50%;background:linear-gradient(#d9d9d9,#cfcfcf);border:1px solid #b9b9b9"></div>
<div class="a" style="left:94px;top:8px;width:22px;height:22px;border-radius:50%;background:linear-gradient(#d9d9d9,#cfcfcf);border:1px solid #b9b9b9"></div>
<span id="title" class="t" style="left:1333.5px;top:4.7px;font-size:27.91px;color:#4a4a4a;font-weight:400;transform:scaleX(0.9507);">Ultimaker Cura</span>
<div class="a" style="left:0;top:42px;width:2840px;height:156px;background:linear-gradient(90deg,#0a0844 0%,#120e4e 20%,#1b155a 42%,#17125a 55%,#110d4e 75%,#0a0844 90%,#0a0844 100%)"></div>
<svg width="2840" height="200" style="top:0;left:0" viewBox="0 0 2840 200">
<g stroke="#fff" stroke-width="11" fill="none" stroke-linejoin="round">
<path d="M66.5,80.2 H47 Q29.5,80.2 29.5,96 Q29.5,111.7 47,111.7 H66.5"/>
<path d="M81.5,74.5 V95 Q81.5,111.7 98,111.7 H113.5 M113.5,74.5 V117.2"/>
<path d="M134.8,117.2 V96 Q134.8,80.2 151,80.2 H158.8"/>
<path d="M203.4,80.2 H182 Q166,80.2 166,96 Q166,111.7 182,111.7 H187 M197.9,74.5 V117.2"/>
</g>
<polygon points="220,98 232,98 232,108.5 226.5,114 216,114 216,103" fill="#2ba3dd"/>
</svg>
<span id="nav1" class="t" style="left:1024.0px;top:76.1px;font-size:31.98px;color:#fff;font-weight:400;transform:scaleX(0.8422);">VORBEREITEN</span>
<div class="a" style="left:1286px;top:62px;width:266px;height:61px;background:#fff;border-radius:5px"></div>
<span id="nav2" class="t" style="left:1338.5px;top:76.1px;font-size:31.98px;color:#0a0844;font-weight:400;transform:scaleX(0.8831);">VORSCHAU</span>
<span id="nav3" class="t" style="left:1619.0px;top:76.1px;font-size:31.98px;color:#fff;font-weight:400;transform:scaleX(0.8641);">ÜBERWACHEN</span>
<div class="a" style="left:2488px;top:68px;width:152px;height:48px;border:2px solid #fff;border-radius:5px"></div>
<div class="a" style="left:2671px;top:68px;width:144px;height:48px;border:2px solid #fff;border-radius:5px"></div>
<span id="mk" class="t" style="left:2505.0px;top:77.4px;font-size:27.62px;color:#fff;font-weight:400;transform:scaleX(0.9580);">Marktplatz</span>
<span id="an" class="t" style="left:2687.0px;top:77.4px;font-size:27.62px;color:#fff;font-weight:400;transform:scaleX(0.9250);">Anmelden</span>
<div class="a" style="left:212px;top:146px;width:2419px;height:104px;background:linear-gradient(#fff 55%,#f8f8f8);border-radius:0 0 6px 6px;box-shadow:0 3px 0 #dadada"></div>
<div class="a" style="left:810px;top:146px;width:2px;height:107px;background:#d0d0d0"></div>
<div class="a" style="left:1642px;top:146px;width:2px;height:107px;background:#d0d0d0"></div>
<span id="p1" class="t" style="left:238.0px;top:179.7px;font-size:32.41px;color:#808080;font-weight:400;">Typen anzeigen</span>
<span id="p2" class="t" style="left:494.0px;top:179.7px;font-size:32.41px;color:#1a1a1a;font-weight:400;transform:scaleX(0.9878);">Schichtenansi...</span>
<span id="p3" class="t" style="left:838.6px;top:179.7px;font-size:32.41px;color:#808080;font-weight:400;transform:scaleX(0.9600);">Farbschema</span>
<span id="p4" class="t" style="left:1039.0px;top:179.7px;font-size:32.41px;color:#1a1a1a;font-weight:400;transform:scaleX(1.0046);">Materialfarbe</span>
<span id="p5" class="t" style="left:1724.6px;top:179.7px;font-size:32.41px;color:#1a1a1a;font-weight:400;transform:scaleX(1.0714);">creality-cr-10 0.2mm</span>
<span id="p6" class="t" style="left:2195.7px;top:179.7px;font-size:32.41px;color:#1a1a1a;font-weight:400;transform:scaleX(0.8647);">20%</span>
<span id="p7" class="t" style="left:2345.8px;top:179.7px;font-size:32.41px;color:#1a1a1a;font-weight:400;transform:scaleX(0.8155);">Ein</span>
<span id="p8" class="t" style="left:2474.5px;top:179.7px;font-size:32.41px;color:#1a1a1a;font-weight:400;transform:scaleX(0.9401);">Aus</span>
<svg width="2840" height="260" style="top:0;left:0" viewBox="0 0 2840 260">
<polyline points="777,188 766,198.5 777,209" fill="none" stroke="#333" stroke-width="3.2"/>
<g transform="translate(1592,208.5) rotate(-45)" fill="#6a6a6a"><path d="M0,0 L6,-3.6 H28.0 Q30.5,-3.6 30.5,-1.1 V1.1 Q30.5,3.6 28.0,3.6 H6 Z"/><path d="M23.0,-4.6 V4.6" stroke="#fff" stroke-width="1.6"/><path d="M7,0 H21.5" stroke="#fff" stroke-width="0.9" opacity="0.7"/><circle cx="3.2" cy="0" r="1.1" fill="#fff"/></g>
<g transform="translate(2582,208.5) rotate(-45)" fill="#6a6a6a"><path d="M0,0 L6,-3.6 H28.0 Q30.5,-3.6 30.5,-1.1 V1.1 Q30.5,3.6 28.0,3.6 H6 Z"/><path d="M23.0,-4.6 V4.6" stroke="#fff" stroke-width="1.6"/><path d="M7,0 H21.5" stroke="#fff" stroke-width="0.9" opacity="0.7"/><circle cx="3.2" cy="0" r="1.1" fill="#fff"/></g>
<g fill="#0a0844"><rect x="1674" y="180" width="34" height="12.3"/><rect x="1674" y="199" width="25" height="5.5"/><rect x="1674" y="211" width="13" height="3"/></g>
<defs><clipPath id="infc"><rect x="0" y="0" width="33.5" height="33.3"/></clipPath></defs><g transform="translate(2144.3,180.4)"><rect x="0" y="0" width="33.5" height="33.3" fill="none" stroke="#2a2870" stroke-width="1.5"/><g clip-path="url(#infc)" stroke="#2a2870" stroke-width="1.4" fill="none"><path d="M-2,21.17 L21.17,-2 M10.7,36 L36,10.7 M-2,15.9 L18,35.9 M-2,-10.8 L36,27.2 M22.3,0 L36,13.7 M32.7,0 L20.75,11.95 M7.4,25.3 L-1,33.7 M-1,3.8 L7.2,12 M20.95,25.75 L28.5,33.3"/></g></g>
<polygon points="2294.2,213.7 2294.2,193.1 2300.9,193.1 2300.9,200.3 2307.9,200.3 2307.9,207.1 2315,207.1 2315,213.7" fill="#0a0844"/><polyline points="2301.6,199.4 2306,190.4 2301.6,180.6 2322.6,180.6 2318.6,190.4 2326.5,209.3 2315,209.3" fill="none" stroke="#2a2870" stroke-width="1.5" stroke-linejoin="miter"/>
<g fill="none" stroke="#0a0844" stroke-width="1.6"><path d="M2427,191.3 Q2441,198.5 2454.8,191.3"/><path d="M2427,198.7 H2454.8"/><path d="M2441,180 V186 M2441,209 V214"/></g><g fill="#0a0844"><polygon points="2437.2,184.5 2444.9,184.5 2441,190.8"/><polygon points="2437.2,209.2 2444.9,209.2 2441,202.6"/></g>
</svg>
<div class="a" style="left:0;top:818px;width:101px;height:637px;background:linear-gradient(90deg,#f4f4f4,#fbfbfb);border-right:1px solid #c9c9c9;border-top:2px solid #c4c4c4;border-bottom:2px solid #c4c4c4;border-radius:0 0 4px 0"></div>
<div class="a" style="left:0;top:924px;width:101px;height:2px;background:#c4c4c4"></div>
<div class="a" style="left:0;top:1030px;width:101px;height:2px;background:#c4c4c4"></div>
<div class="a" style="left:0;top:1137px;width:101px;height:2px;background:#c4c4c4"></div>
<div class="a" style="left:0;top:1243px;width:101px;height:2px;background:#c4c4c4"></div>
<div class="a" style="left:0;top:1349px;width:101px;height:2px;background:#c4c4c4"></div>
<svg width="120" height="1460" style="left:0;top:0" viewBox="0 0 120 1460"><g fill="none" stroke="#b9b6cc" stroke-width="2"><path d="M40,847 H31.5 L39,866 M25,872 H40 M32,872 L25.5,896 H40"/><path d="M40,1060 H31.5 L39,1079 M32,1080 L25.5,1108 H40"/><ellipse cx="38" cy="1080" rx="13" ry="6"/><path d="M40,1167 H34.5 L40,1185 M34,1190 L28,1211 H40"/></g><g fill="#b9b6cc"><polygon points="36,956 40,956 40,963 36,958"/><polygon points="31,971 40,971 40,1001 25,1001"/><polygon points="34.5,1275 40,1275 40,1290 36,1282"/><polygon points="27,1296 40,1296 40,1328 18.8,1328"/></g><g fill="#c9c6d8"><rect x="24" y="1377" width="19" height="51" fill="none" stroke="#c9c6d8" stroke-width="2.5"/><path d="M43,1393 H57 V1410 H76 V1428 H43 Z"/><path d="M30,1398 L37,1405 M37,1398 L30,1405" stroke="#c9c6d8" stroke-width="2"/></g></svg>
<div class="a" style="left:38px;top:278px;width:1400px;height:1043px;background:#ececec;border-radius:10px 10px 6px 6px;box-shadow:0 22px 70px rgba(0,0,0,0.42),0 0 0 1px rgba(0,0,0,0.18);overflow:hidden">
<div class="a" style="left:0;top:0;width:1400px;height:43px;background:linear-gradient(#ebebeb,#d6d6d6);border-bottom:1px solid #b4b4b4"></div>
</div>
<div class="a" style="left:54px;top:288px;width:23px;height:23px;border-radius:50%;background:#fc605b;border:1px solid #e2463f"></div>
<div class="a" style="left:94px;top:288px;width:22px;height:22px;border-radius:50%;background:#d4d4d4;border:1px solid #bdbdbd"></div>
<div class="a" style="left:134px;top:288px;width:22px;height:22px;border-radius:50%;background:#d4d4d4;border:1px solid #bdbdbd"></div>
<span id="dt" class="t" style="left:593.0px;top:285.3px;font-size:27.03px;color:#4a4a4a;font-weight:400;">Plugin Nachbearbeitung</span>
<span id="sk" class="t" style="left:68.8px;top:351.3px;font-size:37.79px;color:#222;font-weight:400;transform:scaleX(0.9738);">Skripts Nachbearbeitung</span>
<div class="a" style="left:80px;top:406px;width:618px;height:46px;background:#b3d7ff"></div>
<span id="cf" class="t" style="left:88.7px;top:414.0px;font-size:27.62px;color:#1a1a1a;font-weight:400;transform:scaleX(0.9895);">Change filament at height 3.4</span>
<div class="a" style="left:565px;top:411px;width:35.0px;height:36px;background:linear-gradient(#fff,#f1f1f1);border:1px solid #a9a9a9;border-radius:5px;box-shadow:0 1px 1px rgba(0,0,0,0.15)"></div>
<div class="a" style="left:605.5px;top:411px;width:34.5px;height:36px;background:linear-gradient(#fff,#f1f1f1);border:1px solid #a9a9a9;border-radius:5px;box-shadow:0 1px 1px rgba(0,0,0,0.15)"></div>
<div class="a" style="left:645.7px;top:411px;width:34.8px;height:36px;background:linear-gradient(#fff,#f1f1f1);border:1px solid #a9a9a9;border-radius:5px;box-shadow:0 1px 1px rgba(0,0,0,0.15)"></div>
<svg width="720" height="520" style="left:0;top:0" viewBox="0 0 720 520"><g fill="none" stroke="#111" stroke-width="2.6"><polyline points="577,434 584,427 591,434"/><polyline points="617,427 624,434 631,427"/></g><g stroke="#111" stroke-width="3.4"><path d="M657,423 L670,436 M670,423 L657,436"/></g></svg>
<div class="a" style="left:69px;top:466.5px;width:285px;height:46px;background:linear-gradient(#fff,#f3f3f3);border:1px solid #a8a8a8;border-radius:5px;box-shadow:0 1px 1px rgba(0,0,0,0.2)"></div>
<svg width="720" height="520" style="left:0;top:0" viewBox="0 0 720 520"><polygon points="333,489 347,489 340,497" fill="#6a6a6a"/></svg>
<span id="es" class="t" style="left:77.5px;top:474.0px;font-size:27.62px;color:#1a1a1a;font-weight:400;transform:scaleX(0.9750);">Ein Skript hinzufügen</span>
<div class="a" style="left:738px;top:338px;width:684px;height:903px;background:#fff"></div>
<span id="ch" class="t" style="left:752.5px;top:351.5px;font-size:37.06px;color:#111;font-weight:400;transform:scaleX(1.0099);">Change filament at height 3.4</span>
<span id="l0" class="t" style="left:764.6px;top:402.0px;font-size:25.87px;color:#8d8d8d;font-weight:400;transform:scaleX(0.9537);">Pause type</span>
<div class="a" style="left:1101px;top:393px;width:280px;height:46px;background:#fff;border:2px solid #c6c6c6;border-radius:4px"></div>
<span id="v0" class="t" style="left:1113.0px;top:402.9px;font-size:25.73px;color:#1a1a1a;font-weight:400;transform:scaleX(0.9372);">Layer</span>
<span id="l1" class="t" style="left:764.6px;top:456.0px;font-size:25.87px;color:#8d8d8d;font-weight:400;transform:scaleX(0.9919);">Pause/Change method</span>
<div class="a" style="left:1101px;top:447px;width:280px;height:46px;background:#fff;border:2px solid #c6c6c6;border-radius:4px"></div>
<span id="v1" class="t" style="left:1113.0px;top:456.9px;font-size:25.73px;color:#1a1a1a;font-weight:400;transform:scaleX(0.9689);">M0 Stop</span>
<span id="l2" class="t" style="left:764.6px;top:512.0px;font-size:25.87px;color:#8d8d8d;font-weight:400;transform:scaleX(0.9582);">Pause at layer</span>
<div class="a" style="left:1101px;top:503px;width:280px;height:46px;background:#fff;border:2px solid #c6c6c6;border-radius:4px"></div>
<span id="v2" class="t" style="left:1113.0px;top:512.9px;font-size:25.73px;color:#1a1a1a;font-weight:400;transform:scaleX(0.9432);">8</span>
<span id="l3" class="t" style="left:764.6px;top:566.0px;font-size:25.87px;color:#8d8d8d;font-weight:400;">Change filament at pause</span>
<div class="a" style="left:1101px;top:557px;width:46px;height:46px;background:#fff;border:2px solid #c6c6c6;border-radius:4px"></div>
<span id="l4" class="t" style="left:764.6px;top:620.0px;font-size:25.87px;color:#8d8d8d;font-weight:400;transform:scaleX(1.0096);">Cool extruder on pause</span>
<div class="a" style="left:1101px;top:611px;width:46px;height:46px;background:#fff;border:2px solid #c6c6c6;border-radius:4px"></div>
<span id="l5" class="t" style="left:764.6px;top:674.0px;font-size:25.87px;color:#8d8d8d;font-weight:400;transform:scaleX(0.8840);">Beep</span>
<div class="a" style="left:1101px;top:665px;width:46px;height:46px;background:#fff;border:2px solid #c6c6c6;border-radius:4px"></div>
<span id="l6" class="t" style="left:764.6px;top:727.8px;font-size:25.87px;color:#8d8d8d;font-weight:400;">Park print head X</span>
<div class="a" style="left:1101px;top:718.8px;width:280px;height:46px;background:#fff;border:2px solid #c6c6c6;border-radius:4px"></div>
<span id="v6" class="t" style="left:1113.0px;top:728.7px;font-size:25.73px;color:#1a1a1a;font-weight:400;">10</span>
<span id="mm6" class="t" style="left:1329.0px;top:728.6px;font-size:25.87px;color:#8d8d8d;font-weight:400;">mm</span>
<span id="l7" class="t" style="left:764.6px;top:781.9px;font-size:25.87px;color:#8d8d8d;font-weight:400;">Park print head Y</span>
<div class="a" style="left:1101px;top:772.9px;width:280px;height:46px;background:#fff;border:2px solid #c6c6c6;border-radius:4px"></div>
<span id="v7" class="t" style="left:1113.0px;top:782.8px;font-size:25.73px;color:#1a1a1a;font-weight:400;">10</span>
<span id="mm7" class="t" style="left:1329.0px;top:782.7px;font-size:25.87px;color:#8d8d8d;font-weight:400;">mm</span>
<span id="l8" class="t" style="left:764.6px;top:835.8px;font-size:25.87px;color:#8d8d8d;font-weight:400;">Move print head Z</span>
<div class="a" style="left:1101px;top:826.8px;width:280px;height:46px;background:#fff;border:2px solid #c6c6c6;border-radius:4px"></div>
<span id="v8" class="t" style="left:1113.0px;top:836.7px;font-size:25.73px;color:#1a1a1a;font-weight:400;transform:scaleX(0.9782);">5</span>
<span id="mm8" class="t" style="left:1329.0px;top:836.6px;font-size:25.87px;color:#8d8d8d;font-weight:400;">mm</span>
<span id="l9" class="t" style="left:764.6px;top:890.0px;font-size:25.87px;color:#8d8d8d;font-weight:400;transform:scaleX(1.0396);">Minimum par...rint head Z</span>
<div class="a" style="left:1101px;top:881px;width:280px;height:46px;background:#fff;border:2px solid #c6c6c6;border-radius:4px"></div>
<span id="v9" class="t" style="left:1113.0px;top:890.9px;font-size:25.73px;color:#1a1a1a;font-weight:400;">25</span>
<span id="mm9" class="t" style="left:1329.0px;top:890.8px;font-size:25.87px;color:#8d8d8d;font-weight:400;">mm</span>
<span id="l10" class="t" style="left:764.6px;top:943.7px;font-size:25.87px;color:#8d8d8d;font-weight:400;">Retraction distance</span>
<div class="a" style="left:1101px;top:934.7px;width:280px;height:46px;background:#fff;border:2px solid #c6c6c6;border-radius:4px"></div>
<span id="v10" class="t" style="left:1113.0px;top:944.6px;font-size:25.73px;color:#1a1a1a;font-weight:400;transform:scaleX(0.9782);">5</span>
<span id="mm10" class="t" style="left:1329.0px;top:944.5px;font-size:25.87px;color:#8d8d8d;font-weight:400;">mm</span>
<span id="l11" class="t" style="left:764.6px;top:998.0px;font-size:25.87px;color:#8d8d8d;font-weight:400;transform:scaleX(1.0100);">Extrusion distance</span>
<div class="a" style="left:1101px;top:989px;width:280px;height:46px;background:#fff;border:2px solid #c6c6c6;border-radius:4px"></div>
<span id="v11" class="t" style="left:1113.0px;top:998.9px;font-size:25.73px;color:#1a1a1a;font-weight:400;transform:scaleX(0.9782);">5</span>
<span id="mm11" class="t" style="left:1329.0px;top:998.8px;font-size:25.87px;color:#8d8d8d;font-weight:400;">mm</span>
<span id="l12" class="t" style="left:764.6px;top:1052.0px;font-size:25.87px;color:#8d8d8d;font-weight:400;transform:scaleX(0.9823);">Prime distance</span>
<div class="a" style="left:1101px;top:1043px;width:280px;height:46px;background:#fff;border:2px solid #c6c6c6;border-radius:4px"></div>
<span id="v12" class="t" style="left:1113.0px;top:1052.9px;font-size:25.73px;color:#1a1a1a;font-weight:400;transform:scaleX(0.9782);">5</span>
<span id="mm12" class="t" style="left:1329.0px;top:1052.8px;font-size:25.87px;color:#8d8d8d;font-weight:400;">mm</span>
<svg width="1500" height="1400" style="left:0;top:0" viewBox="0 0 1500 1400"><polyline points="1336,414 1347,424 1358,414" fill="none" stroke="#444" stroke-width="3"/><polyline points="1336,468 1347,478 1358,468" fill="none" stroke="#444" stroke-width="3"/><polyline points="1117,581 1124,588 1136,575" fill="none" stroke="#1a1a1a" stroke-width="3.6"/><polyline points="1117,635 1124,642 1136,629" fill="none" stroke="#1a1a1a" stroke-width="3.6"/><polyline points="1117,689 1124,696 1136,683" fill="none" stroke="#1a1a1a" stroke-width="3.6"/></svg>
<div class="a" style="left:1262px;top:1258.7px;width:157px;height:44px;background:linear-gradient(#fff,#f1f1f1);border:1px solid #a9a9a9;border-radius:5px;box-shadow:0 1px 1px rgba(0,0,0,0.15)"></div>
<span id="cl" class="t" style="left:1282.7px;top:1267.5px;font-size:27.03px;color:#1a1a1a;font-weight:400;transform:scaleX(0.9813);">Schließen</span>
<svg width="400" height="2156" style="left:0;top:0" viewBox="0 0 400 2156"><g transform="translate(25,1968)" fill="#666"><path d="M24,1 L31,8 L11,28 L2,30 L1,29 L3,20 Z"/><path d="M5,22 L9,26" stroke="#f3f3f3" stroke-width="1.5"/><path d="M20,5 L27,12" stroke="#f3f3f3" stroke-width="1.5"/></g><g fill="#666" stroke="#666" stroke-width="2" stroke-linejoin="round"><path d="M35,2097 L50,2090 L65,2097 L65,2114 L50,2121 L35,2114 Z"/><path d="M35,2097 L50,2104 L65,2097 M50,2104 V2121" stroke="#f3f3f3" stroke-width="2.2" fill="none"/><path d="M99,2098 L106,2091 H128 V2113 L121,2120 H99 Z" fill="none"/><rect x="99" y="2098" width="22" height="22"/><path d="M121,2098 L128,2091" /><path d="M163,2098 L170,2091 H192 V2113 L185,2120 H163 Z" fill="none"/><path d="M163,2098 L170,2091 H192 L185,2098 Z"/><path d="M185,2098 V2120 M163,2098 H185"/><path d="M227.3,2091 H246.5 L256.2,2100.7 V2120.6 H236.5 L227.3,2110.9 Z" fill="none"/><path d="M227.3,2091 L236.5,2100.7 V2120.6 L227.3,2110.9 Z"/><path d="M236.5,2100.7 H256.2"/><path d="M291,2098 L298,2091 H320 V2113 L313,2120 H291 Z" fill="none"/><path d="M313,2098 L320,2091 V2113 L313,2120 Z"/><path d="M291,2098 H313"/></g></svg>
<span id="cc" class="t" style="left:82.0px;top:1966.8px;font-size:28.63px;color:#5f5f5f;font-weight:400;transform:scaleX(0.8781);">CCR10_Exquisite Densor</span>
<span id="dim" class="t" style="left:25.0px;top:2019.7px;font-size:27.62px;color:#5f5f5f;font-weight:400;transform:scaleX(0.9852);">40.0 x 80.0 x 2.4 mm</span>
<div class="a" style="left:2794.5px;top:860px;width:11px;height:290px;background:#dcdcdc;border-radius:5px"></div>
<div class="a" style="left:2794.5px;top:1137px;width:11px;height:359px;background:#0a0844"></div>
<div class="a" style="left:2780px;top:1117px;width:40px;height:40px;border-radius:50%;background:#0a0844"></div>
<div class="a" style="left:2780px;top:1476px;width:40px;height:40px;border-radius:50%;background:#0a0844"></div>
<svg width="2840" height="2156" style="left:0;top:0" viewBox="0 0 2840 2156"><path d="M2655,1103 H2739 V1116 L2759,1136 L2739,1156 V1169 H2655 Z" fill="#fff" stroke="#c8c8c8" stroke-width="1.5"/><polygon points="1043.5,2095 1072.5,2112 1043.5,2129" fill="#0a0844"/><rect x="1104" y="2105.6" width="640" height="11.6" rx="5.8" fill="#0a0844"/><circle cx="1740" cy="2111.4" r="20" fill="#0a0844"/></svg>
<span id="seven" class="t" style="left:2703.8px;top:1122.0px;font-size:25.58px;color:#222;font-weight:700;transform:scaleX(0.9063);">7</span>
<div class="a" style="left:2036px;top:2013px;width:64px;height:63px;background:#f0f0f0;border-radius:4px;box-shadow:0 3px 0 #dcdcdc"></div>
<div class="a" style="left:2127px;top:1861px;width:670px;height:254px;background:#fff;border:2px solid #cfcfcf;border-radius:6px"></div>
<div class="a" style="left:2170px;top:2018px;width:538px;height:68px;background:#2671e2;border-radius:4px 0 0 4px;box-shadow:inset 0 -3px 0 #1e5fc5"></div>
<div class="a" style="left:2708px;top:2018px;width:50px;height:68px;background:#1e5fcc;border-radius:0 4px 4px 0;box-shadow:inset 0 -3px 0 #4b3cc4"></div>
<svg width="2840" height="2156" style="left:0;top:0" viewBox="0 0 2840 2156"><circle cx="2191" cy="1918.8" r="19.5" fill="none" stroke="#0a0844" stroke-width="2.4"/><polyline points="2191,1906.5 2191,1919.2 2198,1925.8" fill="none" stroke="#0a0844" stroke-width="2.4" stroke-linecap="round" stroke-linejoin="round"/><circle cx="2737" cy="1918.75" r="20.9" fill="#0a0844"/><circle cx="2737" cy="1909.7" r="3.9" fill="#fff"/><path d="M2731.2,1915.3 H2741.3 L2738.3,1929.3 C2738.1,1930.2 2738.9,1930.4 2740,1929.7 L2742.2,1928.2 C2740.3,1931.7 2737.4,1932.8 2734.6,1932.5 C2732.6,1932.3 2731.5,1931 2731.9,1929 L2734.2,1918 C2734.3,1917.3 2733.4,1916.6 2731.2,1916.4 Z" fill="#fff"/><g stroke="#0a0844" stroke-linecap="round"><path d="M2176,1959.5 V1992.5 M2206,1959.5 V1992.5" stroke-width="3.8" stroke-linecap="butt"/><path d="M2182.6,1963.5 V1988.8 M2188.1,1963.5 V1988.8 M2199.4,1963.5 V1988.8 M2193.8,1963.5 V1997" stroke-width="2"/></g><polyline points="2719,2044 2732,2057 2745,2044" fill="none" stroke="#fff" stroke-width="3.4"/><g transform="translate(2030,2005)" fill="#1e63d8"><path d="M33.2,49.6 L43.5,39.3 L46.3,42.1 L36,52.4 Z"/><path d="M56.4,49.6 L46.1,39.3 L43.3,42.1 L53.6,52.4 Z"/><path d="M32.3,40 C31.6,33.5 35.5,28.5 39.8,27.1 L40.5,24.9 L43.6,28.2 L42.3,29.8 C40.2,31.2 40,33.8 41.7,36 L43.2,37.6 L40.6,40.2 L39.4,39 C37.5,37.2 34.6,37.5 32.3,40 Z"/><path d="M43.2,40 L47.6,35.6 C46.6,31.5 48,27.5 52.2,25.6 C53.6,25 54.6,25 55.3,25.3 L51.6,29 L53.2,32.6 L56.8,34.2 L57.9,31 C58.7,33.5 57.4,36.6 54.6,37.6 C52.6,38.3 50.8,38.1 49.6,37.6 L45.5,42.2 Z"/></g></svg>
<span id="min" class="t" style="left:2226.0px;top:1900.3px;font-size:32.85px;color:#111;font-weight:400;transform:scaleX(0.9936);">20 Minuten</span>
<span id="g3" class="t" style="left:2226.0px;top:1962.0px;font-size:27.62px;color:#111;font-weight:400;transform:scaleX(0.9471);">3g · 0.99m</span>
<span id="oct" class="t" style="left:2298.0px;top:2032.7px;font-size:31.25px;color:#fff;font-weight:400;transform:scaleX(1.0507);">Print with OctoPrint</span>
</body></html>
